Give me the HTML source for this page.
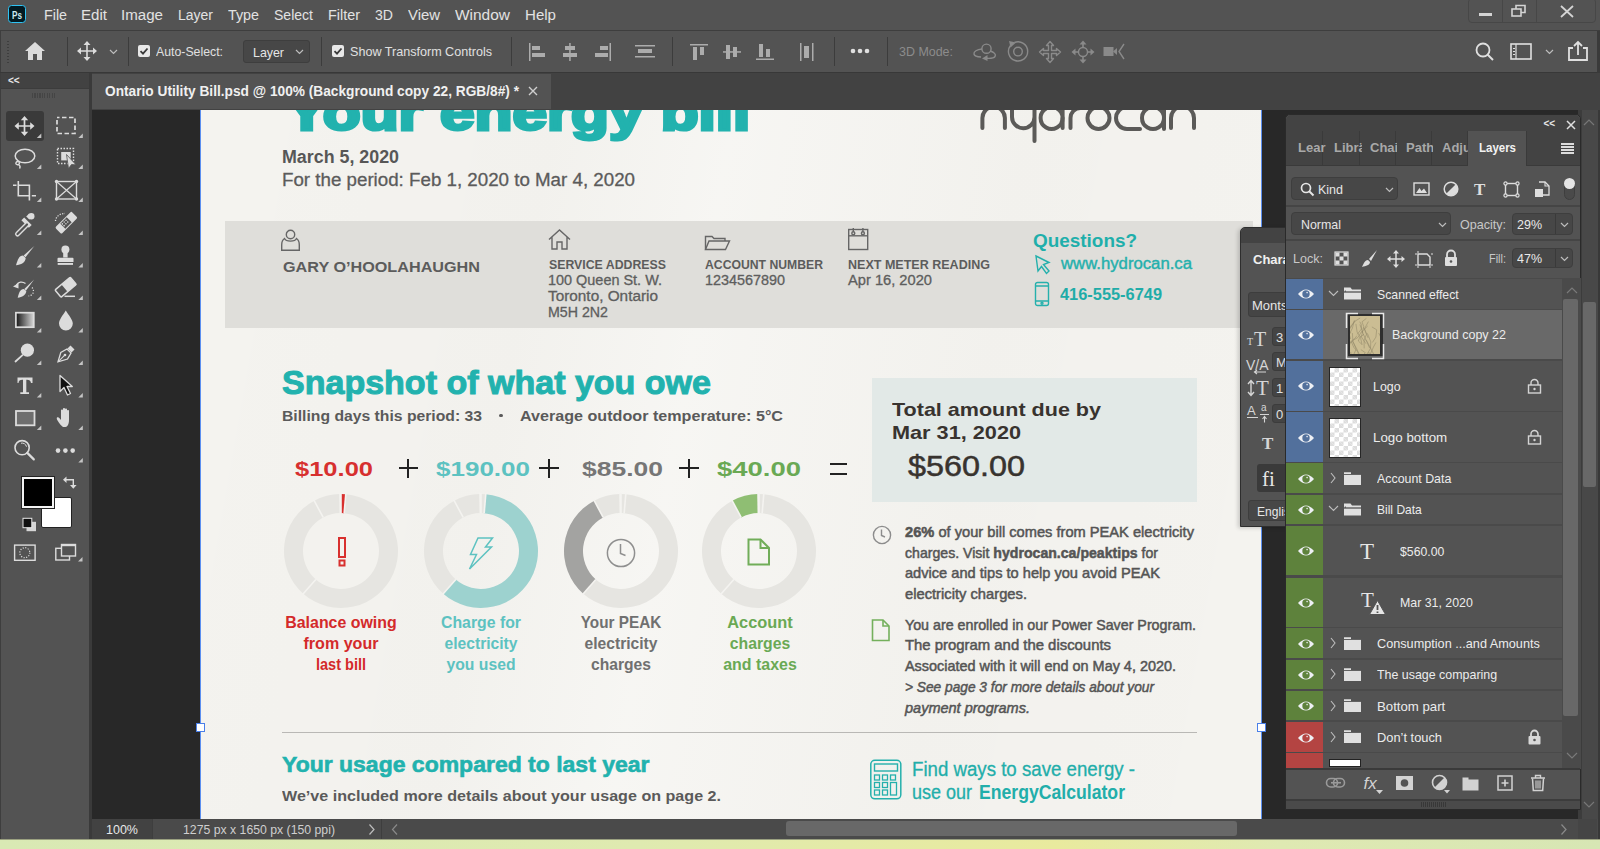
<!DOCTYPE html><html><head><meta charset="utf-8"><style>html,body{margin:0;padding:0;width:1600px;height:849px;overflow:hidden;background:#282828;}body>div,body>svg{position:absolute;box-sizing:border-box;}.t{font-family:"Liberation Sans",sans-serif;}</style></head><body>
<div style="left:0px;top:0px;width:1600px;height:30px;background:#535353;"></div>
<div style="left:0px;top:30px;width:1600px;height:1px;background:#3e3e3e;"></div>
<div style="left:8px;top:5px;width:18px;height:18px;border:1.7px solid #2fc3f4;border-radius:3.5px;background:#031a22;"></div>
<div id="t1" class="t" style="top:9.61px;font-size:10.5px;line-height:10.5px;color:#cde8f0;font-weight:700;font-family:'Liberation Sans',sans-serif;white-space:pre;left:12px;transform:scaleX(0.7786);transform-origin:0 0;">Ps</div>
<div id="t2" class="t" style="top:6.88px;font-size:15.5px;line-height:15.5px;color:#e2e2e2;font-weight:400;font-family:'Liberation Sans',sans-serif;white-space:pre;left:44px;transform:scaleX(0.9206);transform-origin:0 0;">File</div>
<div id="t3" class="t" style="top:6.88px;font-size:15.5px;line-height:15.5px;color:#e2e2e2;font-weight:400;font-family:'Liberation Sans',sans-serif;white-space:pre;left:81px;transform:scaleX(0.9731);transform-origin:0 0;">Edit</div>
<div id="t4" class="t" style="top:6.88px;font-size:15.5px;line-height:15.5px;color:#e2e2e2;font-weight:400;font-family:'Liberation Sans',sans-serif;white-space:pre;left:121px;transform:scaleX(0.9746);transform-origin:0 0;">Image</div>
<div id="t5" class="t" style="top:6.88px;font-size:15.5px;line-height:15.5px;color:#e2e2e2;font-weight:400;font-family:'Liberation Sans',sans-serif;white-space:pre;left:178px;transform:scaleX(0.9025);transform-origin:0 0;">Layer</div>
<div id="t6" class="t" style="top:6.88px;font-size:15.5px;line-height:15.5px;color:#e2e2e2;font-weight:400;font-family:'Liberation Sans',sans-serif;white-space:pre;left:228px;transform:scaleX(0.9224);transform-origin:0 0;">Type</div>
<div id="t7" class="t" style="top:6.88px;font-size:15.5px;line-height:15.5px;color:#e2e2e2;font-weight:400;font-family:'Liberation Sans',sans-serif;white-space:pre;left:274px;transform:scaleX(0.9050);transform-origin:0 0;">Select</div>
<div id="t8" class="t" style="top:6.88px;font-size:15.5px;line-height:15.5px;color:#e2e2e2;font-weight:400;font-family:'Liberation Sans',sans-serif;white-space:pre;left:328px;transform:scaleX(0.9288);transform-origin:0 0;">Filter</div>
<div id="t9" class="t" style="top:6.88px;font-size:15.5px;line-height:15.5px;color:#e2e2e2;font-weight:400;font-family:'Liberation Sans',sans-serif;white-space:pre;left:375px;transform:scaleX(0.9078);transform-origin:0 0;">3D</div>
<div id="t10" class="t" style="top:6.88px;font-size:15.5px;line-height:15.5px;color:#e2e2e2;font-weight:400;font-family:'Liberation Sans',sans-serif;white-space:pre;left:408px;transform:scaleX(0.9602);transform-origin:0 0;">View</div>
<div id="t11" class="t" style="top:6.88px;font-size:15.5px;line-height:15.5px;color:#e2e2e2;font-weight:400;font-family:'Liberation Sans',sans-serif;white-space:pre;left:455px;transform:scaleX(0.9974);transform-origin:0 0;">Window</div>
<div id="t12" class="t" style="top:6.88px;font-size:15.5px;line-height:15.5px;color:#e2e2e2;font-weight:400;font-family:'Liberation Sans',sans-serif;white-space:pre;left:525px;transform:scaleX(0.9721);transform-origin:0 0;">Help</div>
<div style="left:1468px;top:-2px;width:128px;height:25px;border:1px solid #474747;border-radius:4px;"></div>
<div style="left:1502px;top:0px;width:1px;height:23px;background:#474747;"></div>
<div style="left:1536px;top:0px;width:1px;height:23px;background:#474747;"></div>
<div style="left:1479px;top:13px;width:13px;height:3px;background:#d4d4d4;"></div>
<svg style="left:1511px;top:4px;" width="18" height="14" viewBox="0 0 18 14"><rect x="1" y="5" width="9" height="7" fill="none" stroke="#d4d4d4" stroke-width="1.6"/><path d="M5 5V1.5h9v7h-4" fill="none" stroke="#d4d4d4" stroke-width="1.6"/></svg>
<svg style="left:1560px;top:5px;" width="14" height="13" viewBox="0 0 14 13"><path d="M1 1L13 12M13 1L1 12" stroke="#d4d4d4" stroke-width="1.8"/></svg>
<div style="left:0px;top:31px;width:1600px;height:41px;background:#535353;"></div>
<div style="left:0px;top:31px;width:1px;height:41px;background:#3e3e3e;"></div>
<div style="left:0px;top:72px;width:1600px;height:1px;background:#383838;"></div>
<div style="left:7px;top:41px;width:2px;height:1px;background:#3e3e3e;"></div>
<div style="left:7px;top:44px;width:2px;height:1px;background:#3e3e3e;"></div>
<div style="left:7px;top:47px;width:2px;height:1px;background:#3e3e3e;"></div>
<div style="left:7px;top:50px;width:2px;height:1px;background:#3e3e3e;"></div>
<div style="left:7px;top:53px;width:2px;height:1px;background:#3e3e3e;"></div>
<div style="left:7px;top:56px;width:2px;height:1px;background:#3e3e3e;"></div>
<div style="left:7px;top:59px;width:2px;height:1px;background:#3e3e3e;"></div>
<div style="left:7px;top:62px;width:2px;height:1px;background:#3e3e3e;"></div>
<svg style="left:24px;top:41px;" width="22" height="20" viewBox="0 0 22 20"><path d="M11 1L21 10H18V19H13V13H9V19H4V10H1Z" fill="#dcdcdc"/></svg>
<div style="left:67px;top:37px;width:1px;height:29px;background:#3c3c3c;"></div>
<div style="left:128px;top:37px;width:1px;height:29px;background:#3c3c3c;"></div>
<div style="left:321px;top:37px;width:1px;height:29px;background:#3c3c3c;"></div>
<div style="left:511px;top:37px;width:1px;height:29px;background:#3c3c3c;"></div>
<div style="left:672px;top:37px;width:1px;height:29px;background:#3c3c3c;"></div>
<div style="left:834px;top:37px;width:1px;height:29px;background:#3c3c3c;"></div>
<div style="left:887px;top:37px;width:1px;height:29px;background:#3c3c3c;"></div>
<svg style="left:77px;top:41px;" width="20" height="20" viewBox="0 0 20 20"><path d="M10 1V19M1 10H19" stroke="#dcdcdc" stroke-width="1.6"/><path d="M10 0L6.5 4H13.5ZM10 20L6.5 16H13.5ZM0 10L4 6.5V13.5ZM20 10L16 6.5V13.5Z" fill="#dcdcdc"/></svg>
<svg style="left:109px;top:49px;" width="9" height="6" viewBox="0 0 9 6"><path d="M1 1L4.5 4.5L8 1" fill="none" stroke="#bdbdbd" stroke-width="1.2"/></svg>
<div style="left:138px;top:45px;width:12px;height:12px;background:#e8e8e8;border-radius:2px;"></div>
<svg style="left:138px;top:45px;" width="12" height="12" viewBox="0 0 12 12"><path d="M2.5 6.2L5 8.7L9.5 3.5" fill="none" stroke="#3a3a3a" stroke-width="1.8"/></svg>
<div id="t13" class="t" style="top:45.00px;font-size:13px;line-height:13px;color:#e0e0e0;font-weight:400;font-family:'Liberation Sans',sans-serif;white-space:pre;left:156px;transform:scaleX(0.9460);transform-origin:0 0;">Auto-Select:</div>
<div style="left:243px;top:40px;width:67px;height:23px;background:#474747;border:1px solid #3e3e3e;border-radius:3px;"></div>
<div id="t14" class="t" style="top:46.00px;font-size:13px;line-height:13px;color:#e6e6e6;font-weight:400;font-family:'Liberation Sans',sans-serif;white-space:pre;left:253px;transform:scaleX(0.9529);transform-origin:0 0;">Layer</div>
<svg style="left:295px;top:49px;" width="9" height="6" viewBox="0 0 9 6"><path d="M1 1L4.5 4.5L8 1" fill="none" stroke="#bdbdbd" stroke-width="1.2"/></svg>
<div style="left:332px;top:45px;width:12px;height:12px;background:#e8e8e8;border-radius:2px;"></div>
<svg style="left:332px;top:45px;" width="12" height="12" viewBox="0 0 12 12"><path d="M2.5 6.2L5 8.7L9.5 3.5" fill="none" stroke="#3a3a3a" stroke-width="1.8"/></svg>
<div id="t15" class="t" style="top:45.00px;font-size:13px;line-height:13px;color:#e0e0e0;font-weight:400;font-family:'Liberation Sans',sans-serif;white-space:pre;left:350px;transform:scaleX(0.9681);transform-origin:0 0;">Show Transform Controls</div>
<svg style="left:528px;top:43px;" width="18" height="18" viewBox="0 0 18 18"><rect x="1" y="0" width="1.5" height="18" fill="#acacac"/><rect x="4" y="3" width="8" height="4" fill="#acacac"/><rect x="4" y="10" width="13" height="4" fill="#acacac"/></svg>
<svg style="left:561px;top:43px;" width="18" height="18" viewBox="0 0 18 18"><rect x="8.2" y="0" width="1.5" height="18" fill="#acacac"/><rect x="4" y="3" width="10" height="4" fill="#acacac"/><rect x="2" y="10" width="14" height="4" fill="#acacac"/></svg>
<svg style="left:594px;top:43px;" width="18" height="18" viewBox="0 0 18 18"><rect x="15.5" y="0" width="1.5" height="18" fill="#acacac"/><rect x="6" y="3" width="8" height="4" fill="#acacac"/><rect x="1" y="10" width="13" height="4" fill="#acacac"/></svg>
<svg style="left:635px;top:45px;" width="20" height="14" viewBox="0 0 20 14"><rect x="0" y="0" width="20" height="1.5" fill="#acacac"/><rect x="3" y="4" width="14" height="4" fill="#acacac"/><rect x="0" y="11" width="20" height="1.5" fill="#acacac"/></svg>
<svg style="left:690px;top:43px;" width="18" height="18" viewBox="0 0 18 18"><rect x="0" y="1" width="18" height="1.5" fill="#acacac"/><rect x="3" y="4" width="4" height="13" fill="#acacac"/><rect x="10" y="4" width="4" height="8" fill="#acacac"/></svg>
<svg style="left:723px;top:43px;" width="18" height="18" viewBox="0 0 18 18"><rect x="0" y="8.2" width="18" height="1.5" fill="#acacac"/><rect x="3" y="2" width="4" height="14" fill="#acacac"/><rect x="10" y="4" width="4" height="10" fill="#acacac"/></svg>
<svg style="left:756px;top:43px;" width="18" height="18" viewBox="0 0 18 18"><rect x="0" y="15.5" width="18" height="1.5" fill="#acacac"/><rect x="3" y="1" width="4" height="13" fill="#acacac"/><rect x="10" y="6" width="4" height="8" fill="#acacac"/></svg>
<svg style="left:799px;top:43px;" width="16" height="18" viewBox="0 0 16 18"><rect x="1" y="0" width="1.5" height="18" fill="#acacac"/><rect x="5" y="3" width="5" height="12" fill="#acacac"/><rect x="13" y="0" width="1.5" height="18" fill="#acacac"/></svg>
<svg style="left:850px;top:48px;" width="20" height="6" viewBox="0 0 20 6"><circle cx="3" cy="3" r="2.3" fill="#e0e0e0"/><circle cx="10" cy="3" r="2.3" fill="#e0e0e0"/><circle cx="17" cy="3" r="2.3" fill="#e0e0e0"/></svg>
<div id="t16" class="t" style="top:45.00px;font-size:13px;line-height:13px;color:#8c8c8c;font-weight:400;font-family:'Liberation Sans',sans-serif;white-space:pre;left:899px;transform:scaleX(0.9579);transform-origin:0 0;">3D Mode:</div>
<svg style="left:970px;top:38px;" width="32" height="28" viewBox="0 0 32 28"><circle cx="16.5" cy="10.7" r="4.6" fill="none" stroke="#8a8a8a" stroke-width="1.4"/><path d="M12 11C7 11.5 3.5 13.5 4 16C4.5 18.5 8 18.8 11 19" fill="none" stroke="#8a8a8a" stroke-width="1.4"/><path d="M20 13C24 14 26.5 16.5 25 18.5C24 20 21 20.5 17 20.3" fill="none" stroke="#8a8a8a" stroke-width="1.4"/><path d="M17.5 17L12 20.5L17.5 23Z" fill="#8a8a8a"/></svg>
<svg style="left:1005px;top:38px;" width="26" height="28" viewBox="0 0 26 28"><path d="M9.5 4.5A9.6 9.6 0 1 1 5.5 7.5" fill="none" stroke="#8a8a8a" stroke-width="1.4"/><circle cx="13" cy="13.6" r="4.3" fill="none" stroke="#8a8a8a" stroke-width="1.4"/><path d="M4 3L11 4.5L5.5 9.5Z" fill="#8a8a8a"/></svg>
<svg style="left:1038px;top:40px;" width="24" height="24" viewBox="0 0 24 24"><path d="M12 1.5L15.5 5.5H13.5V10.5H18.5V8.5L22.5 12L18.5 15.5V13.5H13.5V18.5H15.5L12 22.5L8.5 18.5H10.5V13.5H5.5V15.5L1.5 12L5.5 8.5V10.5H10.5V5.5H8.5Z" fill="none" stroke="#8a8a8a" stroke-width="1.4" stroke-linejoin="round"/></svg>
<svg style="left:1070px;top:39px;" width="26" height="26" viewBox="0 0 26 26"><circle cx="13" cy="13" r="4.5" fill="none" stroke="#8a8a8a" stroke-width="1.4"/><path d="M13 1.5L9.5 5.5H16.5ZM13 24.5L9.5 20.5H16.5ZM1.5 13L5.5 9.5V16.5ZM24.5 13L20.5 9.5V16.5Z" fill="#8a8a8a"/><path d="M13 5V8.5M13 17.5V21M5 13H8.5M17.5 13H21" stroke="#8a8a8a" stroke-width="1.6"/></svg>
<svg style="left:1102px;top:42px;" width="24" height="20" viewBox="0 0 24 20"><rect x="1.5" y="5" width="10" height="9" fill="#8a8a8a"/><path d="M11 9.5L15 6V13Z" fill="#8a8a8a"/><path d="M22 2L17 9.5L22 17" fill="none" stroke="#8a8a8a" stroke-width="1.4"/></svg>
<svg style="left:1475px;top:42px;" width="20" height="20" viewBox="0 0 20 20"><circle cx="8" cy="8" r="6.5" fill="none" stroke="#e0e0e0" stroke-width="1.8"/><path d="M12.5 12.5L18 18" stroke="#e0e0e0" stroke-width="2"/></svg>
<svg style="left:1510px;top:43px;" width="22" height="18" viewBox="0 0 22 18"><rect x="1" y="1" width="20" height="15" fill="none" stroke="#e0e0e0" stroke-width="1.6"/><path d="M6 1V16" stroke="#e0e0e0" stroke-width="1.2"/><rect x="3" y="5" width="2" height="1" fill="#e0e0e0"/><rect x="3" y="8" width="2" height="1" fill="#e0e0e0"/><rect x="3" y="11" width="2" height="1" fill="#e0e0e0"/></svg>
<svg style="left:1545px;top:49px;" width="9" height="6" viewBox="0 0 9 6"><path d="M1 1L4.5 4.5L8 1" fill="none" stroke="#bdbdbd" stroke-width="1.2"/></svg>
<svg style="left:1567px;top:40px;" width="22" height="22" viewBox="0 0 22 22"><path d="M6 8H2V20H20V8H16" fill="none" stroke="#e0e0e0" stroke-width="1.8"/><path d="M11 15V2M7 6L11 2L15 6" fill="none" stroke="#e0e0e0" stroke-width="1.8"/></svg>
<div style="left:1597px;top:31px;width:3px;height:42px;background:#3a3a3a;"></div>
<div style="left:0px;top:73px;width:1600px;height:37px;background:#424242;"></div>
<div style="left:92px;top:74px;width:459px;height:35px;background:#535353;"></div>
<div id="t17" class="t" style="top:84.15px;font-size:14px;line-height:14px;color:#f0f0f0;font-weight:700;font-family:'Liberation Sans',sans-serif;white-space:pre;left:105px;transform:scaleX(0.9790);transform-origin:0 0;">Ontario Utility Bill.psd @ 100% (Background copy 22, RGB/8#) *</div>
<svg style="left:528px;top:86px;" width="10" height="10" viewBox="0 0 10 10"><path d="M1 1L9 9M9 1L1 9" stroke="#cfcfcf" stroke-width="1.4"/></svg>
<div style="left:0px;top:73px;width:89px;height:766px;background:#535353;"></div>
<div style="left:0px;top:73px;width:89px;height:15px;background:#424242;"></div>
<div style="left:0px;top:87.5px;width:89px;height:1px;background:#3c3c3c;"></div>
<div style="left:0px;top:73px;width:1.3px;height:766px;background:#3e3e3e;"></div>
<div style="left:89px;top:73px;width:3px;height:766px;background:#3a3a3a;"></div>
<div id="t18" class="t" style="top:75.53px;font-size:10px;line-height:10px;color:#e8e8e8;font-weight:700;font-family:'Liberation Sans',sans-serif;white-space:pre;left:8px;">&lt;&lt;</div>
<div style="left:32.0px;top:92.5px;width:1.2px;height:5px;background:#454545;"></div>
<div style="left:34.45px;top:92.5px;width:1.2px;height:5px;background:#454545;"></div>
<div style="left:36.9px;top:92.5px;width:1.2px;height:5px;background:#454545;"></div>
<div style="left:39.35px;top:92.5px;width:1.2px;height:5px;background:#454545;"></div>
<div style="left:41.8px;top:92.5px;width:1.2px;height:5px;background:#454545;"></div>
<div style="left:44.25px;top:92.5px;width:1.2px;height:5px;background:#454545;"></div>
<div style="left:46.7px;top:92.5px;width:1.2px;height:5px;background:#454545;"></div>
<div style="left:49.150000000000006px;top:92.5px;width:1.2px;height:5px;background:#454545;"></div>
<div style="left:51.6px;top:92.5px;width:1.2px;height:5px;background:#454545;"></div>
<div style="left:54.05px;top:92.5px;width:1.2px;height:5px;background:#454545;"></div>
<div style="left:92px;top:110px;width:1508px;height:709px;background:#282828;"></div>
<div style="left:92px;top:819px;width:1508px;height:20px;background:#4a4a4a;"></div>
<div style="left:92px;top:819px;width:60px;height:20px;background:#424242;"></div>
<div style="left:152px;top:819px;width:1px;height:20px;background:#3e3e3e;"></div>
<div style="left:381px;top:819px;width:1px;height:20px;background:#3e3e3e;"></div>
<div id="t19" class="t" style="top:823.00px;font-size:13px;line-height:13px;color:#e8e8e8;font-weight:400;font-family:'Liberation Sans',sans-serif;white-space:pre;left:106px;transform:scaleX(0.9624);transform-origin:0 0;">100%</div>
<div id="t20" class="t" style="top:823.00px;font-size:13px;line-height:13px;color:#cfcfcf;font-weight:400;font-family:'Liberation Sans',sans-serif;white-space:pre;left:183px;transform:scaleX(0.9431);transform-origin:0 0;">1275 px x 1650 px (150 ppi)</div>
<svg style="left:368px;top:823px;" width="8" height="13" viewBox="0 0 8 13"><path d="M1.5 1.5L6 6.5L1.5 11.5" fill="none" stroke="#bdbdbd" stroke-width="1.2"/></svg>
<svg style="left:391px;top:823px;" width="8" height="13" viewBox="0 0 8 13"><path d="M6 1.5L1.5 6.5L6 11.5" fill="none" stroke="#8a8a8a" stroke-width="1.2"/></svg>
<div style="left:786px;top:821px;width:451px;height:15px;background:#686868;border-radius:3px;"></div>
<svg style="left:1560px;top:823px;" width="8" height="13" viewBox="0 0 8 13"><path d="M1.5 1.5L6 6.5L1.5 11.5" fill="none" stroke="#8a8a8a" stroke-width="1.2"/></svg>
<div style="left:1578px;top:819px;width:19px;height:20px;background:#454545;"></div>
<div style="left:0px;top:839px;width:1600px;height:10px;background:linear-gradient(90deg,#d9e9b4 0%,#dfeab0 40%,#e9ea9e 66%,#dfe9b2 80%,#d7e6b4 100%);"></div>
<div style="left:0px;top:839px;width:1600px;height:1px;background:#9aa080;"></div>
<div style="left:6px;top:111px;width:38px;height:30px;background:#3a3a3a;border-radius:3px;"></div>
<svg style="left:0px;top:0px;" width="89" height="570" viewBox="0 0 89 570"><path d="M41.3 133.5V138H36.8Z" fill="#c4c4c4"/><path d="M82.8 133.5V138H78.3Z" fill="#c4c4c4"/><path d="M41.3 164.5V169H36.8Z" fill="#c4c4c4"/><path d="M82.8 164.5V169H78.3Z" fill="#c4c4c4"/><path d="M41.3 197.5V202H36.8Z" fill="#c4c4c4"/><path d="M82.8 197.5V202H78.3Z" fill="#c4c4c4"/><path d="M41.3 230.5V235H36.8Z" fill="#c4c4c4"/><path d="M82.8 230.5V235H78.3Z" fill="#c4c4c4"/><path d="M41.3 263.0V267.5H36.8Z" fill="#c4c4c4"/><path d="M82.8 263.0V267.5H78.3Z" fill="#c4c4c4"/><path d="M41.3 295.5V300H36.8Z" fill="#c4c4c4"/><path d="M82.8 295.5V300H78.3Z" fill="#c4c4c4"/><path d="M41.3 328.0V332.5H36.8Z" fill="#c4c4c4"/><path d="M82.8 328.0V332.5H78.3Z" fill="#c4c4c4"/><path d="M41.3 360.5V365H36.8Z" fill="#c4c4c4"/><path d="M82.8 360.5V365H78.3Z" fill="#c4c4c4"/><path d="M41.3 393.0V397.5H36.8Z" fill="#c4c4c4"/><path d="M82.8 393.0V397.5H78.3Z" fill="#c4c4c4"/><path d="M41.3 425.5V430H36.8Z" fill="#c4c4c4"/><path d="M82.8 425.5V430H78.3Z" fill="#c4c4c4"/><path d="M82.8 458.0V462.5H78.3Z" fill="#c4c4c4"/><path d="M82.5 557V561.5H78Z" fill="#c4c4c4"/><path d="M24.5 118V134M16.5 126H32.5" stroke="#dcdcdc" stroke-width="1.7"/><path d="M24.5 116L20.8 120.3H28.2ZM24.5 136L20.8 131.7H28.2ZM14.5 126L18.8 122.3V129.7ZM34.5 126L30.2 122.3V129.7Z" fill="#dcdcdc"/><rect x="57" y="117.5" width="18" height="16" fill="none" stroke="#dcdcdc" stroke-width="1.7" stroke-dasharray="4.5 2.5" stroke-dashoffset="2"/><ellipse cx="25" cy="156" rx="9.8" ry="6.8" fill="none" stroke="#dcdcdc" stroke-width="1.5"/><path d="M18 161.5c-2.5 0-3 3 -0.5 3.2c2.5 0.2 2.5 -2.5 0.5 -3.5M18.5 164.5c1.5 1 2 2.5 1 4" fill="none" stroke="#dcdcdc" stroke-width="1.4"/><rect x="57.5" y="148.5" width="16" height="15" fill="none" stroke="#dcdcdc" stroke-width="1.4" stroke-dasharray="1.5 1.5"/><rect x="61.2" y="152" width="9.5" height="8.4" fill="#dcdcdc"/><path d="M66.5 154.5L76 164.8L71.5 164.5L68.5 168.6Z" fill="#dcdcdc" stroke="#535353" stroke-width="0.8"/><path d="M13 185.2H16.5M18.3 181V195.8H29.4M18.3 185.2H29.4V200.4M31.8 195.8H36" fill="none" stroke="#dcdcdc" stroke-width="1.6"/><rect x="56.5" y="181.5" width="20" height="17.5" fill="none" stroke="#dcdcdc" stroke-width="1.4"/><path d="M56.5 181.5L76.5 199M76.5 181.5L56.5 199" stroke="#dcdcdc" stroke-width="1.2"/><circle cx="56.5" cy="181.5" r="1.7" fill="#dcdcdc"/><circle cx="56.5" cy="199" r="1.7" fill="#dcdcdc"/><circle cx="76.5" cy="181.5" r="1.7" fill="#dcdcdc"/><circle cx="76.5" cy="199" r="1.7" fill="#dcdcdc"/><circle cx="31.3" cy="216.3" r="3.2" fill="#dcdcdc"/><path d="M22.8 218.8L30.3 226.3" stroke="#dcdcdc" stroke-width="4"/><path d="M27 224.5L17.5 234" stroke="#dcdcdc" stroke-width="5" stroke-linecap="round"/><path d="M27 224.5L17.5 234" stroke="#535353" stroke-width="2.2" stroke-linecap="round"/><path d="M27.8 218L30.5 215.3" stroke="#dcdcdc" stroke-width="4.5"/><g transform="rotate(-45 66 223)"><rect x="55" y="218.5" width="23" height="9" rx="1.5" fill="#dcdcdc"/><rect x="61.5" y="219.5" width="9" height="7" fill="#535353"/><circle cx="62.8" cy="221.0" r="0.75" fill="#dcdcdc"/><circle cx="62.8" cy="223.5" r="0.75" fill="#dcdcdc"/><circle cx="65.39999999999999" cy="221.0" r="0.75" fill="#dcdcdc"/><circle cx="65.39999999999999" cy="223.5" r="0.75" fill="#dcdcdc"/><circle cx="68.0" cy="221.0" r="0.75" fill="#dcdcdc"/><circle cx="68.0" cy="223.5" r="0.75" fill="#dcdcdc"/></g><path d="M55.5 221a9 8 0 0 1 9.5-7.5" fill="none" stroke="#dcdcdc" stroke-width="1.3" stroke-dasharray="1.2 1.4"/><path d="M34.3 246L25.5 257.3L23.6 255.6Z" fill="#dcdcdc"/><path d="M23 255.5C19 255.8 18 259 16 265.3C21 264.8 25.5 262.5 25.7 258Z" fill="#dcdcdc"/><circle cx="65.4" cy="249.5" r="4" fill="#dcdcdc"/><rect x="63.2" y="252" width="4.4" height="5.5" fill="#dcdcdc"/><path d="M58.5 257.7H72.5a1 1 0 0 1 1 1V262H57.5V258.7a1 1 0 0 1 1-1Z" fill="#dcdcdc"/><rect x="57.7" y="263" width="15.3" height="1.9" fill="#dcdcdc"/><path d="M34.2 279.5L26 290.5L24.3 289Z" fill="#dcdcdc"/><path d="M23.8 289C20 289.3 19 292.3 17.7 297.8C22 297.3 26 295 26.3 291Z" fill="#dcdcdc"/><path d="M25.5 283.5C22 281 18.5 282 16.5 285" fill="none" stroke="#dcdcdc" stroke-width="1.4"/><path d="M13 286.5L18.5 283V288.5Z" fill="#dcdcdc"/><path d="M32 287.5a5 5 0 0 1-3.5 8.5" fill="none" stroke="#dcdcdc" stroke-width="1.2" stroke-dasharray="1.2 1.5"/><g transform="rotate(-40 65.5 287)"><rect x="55.5" y="282.5" width="20" height="9.5" rx="1" fill="none" stroke="#dcdcdc" stroke-width="1.5"/><rect x="64" y="282.5" width="11.5" height="9.5" fill="#dcdcdc"/></g><path d="M64.5 296.3H75" stroke="#dcdcdc" stroke-width="1.5"/><defs><linearGradient id="grd" x1="0" x2="1" y1="0" y2="0"><stop offset="0" stop-color="#151515"/><stop offset="1" stop-color="#d8d8d8"/></linearGradient></defs><rect x="15.9" y="312.7" width="17.9" height="14.5" fill="url(#grd)" stroke="#dcdcdc" stroke-width="1.7"/><path d="M65.8 310.6C63 315 59 320 59 323.5A6.9 6.9 0 0 0 72.8 323.5C72.8 320 68.5 315 65.8 310.6Z" fill="#dcdcdc"/><circle cx="27.4" cy="350.2" r="6.6" fill="#dcdcdc"/><path d="M22.5 355.2L15.5 361.5" stroke="#dcdcdc" stroke-width="1.8" stroke-linecap="round"/><path d="M70.5 345.5L74.5 349.5L71.5 352.5L67.5 348.5Z" fill="#dcdcdc"/><path d="M67 349L71 353L67.5 359L58 361.8L60.8 352.5Z" fill="none" stroke="#dcdcdc" stroke-width="1.3"/><path d="M58.5 361.3L64.5 355.3" stroke="#dcdcdc" stroke-width="1.1"/><circle cx="65" cy="355" r="1.3" fill="#dcdcdc"/><path d="M17.5 377.5H32.5V383H31C30.5 380.5 29.5 379.8 27 379.8H26.3V392.3H29V394H20.3V392.3H23V379.8H22.3C19.8 379.8 18.8 380.5 18.5 383H17.5Z" fill="#dcdcdc"/><path d="M60 375.4V391.5L64 387.5L67.5 395L70.5 393.5L67 386.5H72.3Z" fill="#111" stroke="#dcdcdc" stroke-width="1.3" stroke-linejoin="round"/><rect x="16" y="411" width="18.5" height="14.3" fill="#6e6e6e" stroke="#dcdcdc" stroke-width="1.8"/><path d="M63 427C60 424.5 57 420 56.8 418.7C56.5 417.3 58.2 416.8 59.3 418L61 420V410.5C61 409.3 63 409.3 63 410.5V416.5V409C63 407.8 65 407.8 65 409V416.5V409.5C65 408.3 67 408.3 67 409.5V417V411C67 409.8 69 409.8 69 411V420C69 424 67.5 427 65.5 427Z" fill="#dcdcdc"/><circle cx="22.1" cy="447.7" r="7.1" fill="none" stroke="#dcdcdc" stroke-width="1.6"/><path d="M27.3 452.9L33.8 459.4" stroke="#dcdcdc" stroke-width="2.2" stroke-linecap="round"/><path d="M21 443.2a4.5 4.5 0 0 1 5.5 3.5" fill="none" stroke="#dcdcdc" stroke-width="1"/><circle cx="58" cy="450.6" r="2.3" fill="#dcdcdc"/><circle cx="65.4" cy="450.6" r="2.3" fill="#dcdcdc"/><circle cx="72.7" cy="450.6" r="2.3" fill="#dcdcdc"/><path d="M66 479.8H73.3V485.5" fill="none" stroke="#dcdcdc" stroke-width="1.4"/><path d="M63 479.8L66.5 476.5V483ZM73.3 488.8L70 485H76.6Z" fill="#dcdcdc"/><rect x="26.5" y="521.8" width="9.5" height="9.4" fill="#d6d6d6"/><rect x="23" y="518.3" width="8.8" height="9.4" fill="#111" stroke="#e6e6e6" stroke-width="1"/><rect x="14.6" y="545.1" width="20.5" height="15.2" fill="none" stroke="#dcdcdc" stroke-width="1.4"/><circle cx="24.8" cy="552.7" r="5" fill="none" stroke="#dcdcdc" stroke-width="1.2" stroke-dasharray="1.1 1.5"/><rect x="55.8" y="548.3" width="13.7" height="11.7" fill="#535353" stroke="#dcdcdc" stroke-width="1.4"/><rect x="61.5" y="544.5" width="14" height="11.5" fill="#535353" stroke="#dcdcdc" stroke-width="1.4"/><rect x="61.5" y="544" width="14" height="2.2" fill="#dcdcdc"/></svg>
<div style="left:40.6px;top:496.5px;width:31.5px;height:31.8px;background:#fff;border:1px solid #222;border-radius:2px;"></div>
<div style="left:22.4px;top:476.5px;width:31.2px;height:31.2px;background:#000;border:2px solid #f4f4f4;box-shadow:0 0 0 1px #222;"></div>
<div style="left:200px;top:110px;width:1062px;height:709px;background:#f4f3ef;"></div>
<div style="left:200px;top:110px;width:1062px;height:709px;background:linear-gradient(100deg,rgba(0,0,0,0) 0%,rgba(0,0,0,0.008) 30%,rgba(255,255,255,0.25) 45%,rgba(0,0,0,0.006) 70%,rgba(0,0,0,0) 100%);"></div>
<div style="left:200px;top:110px;width:1px;height:709px;background:#5b8ff0;"></div>
<div style="left:1261px;top:110px;width:1px;height:709px;background:#5b8ff0;"></div>
<div style="left:196px;top:723px;width:9px;height:9px;background:#fff;border:1px solid #4a7fe8;"></div>
<div style="left:1257px;top:723px;width:9px;height:9px;background:#fff;border:1px solid #4a7fe8;"></div>
<div style="left:200px;top:110px;width:700px;height:40px;overflow:hidden;"><div style="position:absolute;left:85.6px;top:-22.3px;font-family:'Liberation Sans',sans-serif;font-weight:700;font-size:50px;line-height:50px;color:#22b2ae;-webkit-text-stroke:3.2px #22b2ae;white-space:pre;transform:scaleX(1.241);transform-origin:0 0;" id="title">Your energy bill</div></div>
<svg style="left:970px;top:100px;clip-path:inset(10px 0 0 0);" width="240" height="50" viewBox="0 0 240 50"><path d="M12.4 28V18a11 11 0 0 1 22.5 0V28" fill="none" stroke="#5b5a58" stroke-width="4" stroke-linecap="round"/><path d="M42 5V17a11 11 0 0 0 22.5 0V5M64.5 17V41" fill="none" stroke="#5b5a58" stroke-width="4" stroke-linecap="round"/><path d="M92.6 5V18a11 11 0 1 1 0-0.1" fill="none" stroke="#5b5a58" stroke-width="4" stroke-linecap="round"/><path d="M92.6 18V28" fill="none" stroke="#5b5a58" stroke-width="4" stroke-linecap="round"/><path d="M100.5 28V18a10 10 0 0 1 10-10" fill="none" stroke="#5b5a58" stroke-width="4" stroke-linecap="round"/><circle cx="128.5" cy="18" r="11" fill="none" stroke="#5b5a58" stroke-width="4" stroke-linecap="round"/><path d="M170 29H157a11 11 0 0 1 0-22" fill="none" stroke="#5b5a58" stroke-width="4" stroke-linecap="round"/><path d="M194 5V18a11 11 0 1 1 0-0.1M194 18V29" fill="none" stroke="#5b5a58" stroke-width="4" stroke-linecap="round"/><path d="M201 28V18a11.5 11.5 0 0 1 23 0V28" fill="none" stroke="#5b5a58" stroke-width="4" stroke-linecap="round"/></svg>
<div id="t21" class="t" style="top:148.26px;font-size:18px;line-height:18px;color:#575757;font-weight:700;font-family:'Liberation Sans',sans-serif;white-space:pre;left:282px;transform:scaleX(0.9909);transform-origin:0 0;">March 5, 2020</div>
<div id="t22" class="t" style="top:170.76px;font-size:18px;line-height:18px;color:#5b5b5b;font-weight:400;font-family:'Liberation Sans',sans-serif;white-space:pre;left:282px;transform:scaleX(1.0406);transform-origin:0 0;-webkit-text-stroke:0.3px #5b5b5b;">For the period: Feb 1, 2020 to Mar 4, 2020</div>
<div style="left:225px;top:221px;width:1028px;height:107px;background:#dfdeda;"></div>
<svg style="left:280px;top:228px;" width="22" height="24" viewBox="0 0 22 24"><circle cx="10.5" cy="6.5" r="4.2" fill="none" stroke="#666" stroke-width="1.4"/><path d="M4.5 10.5C2 12 1.7 14 1.7 17V22.3H19.3V17C19.3 14 19 12 16.5 10.5C15 14 6 14 4.5 10.5Z" fill="none" stroke="#666" stroke-width="1.4"/></svg>
<div id="t23" class="t" style="top:258.80px;font-size:15px;line-height:15px;color:#5c5c5c;font-weight:700;font-family:'Liberation Sans',sans-serif;white-space:pre;left:283px;transform:scaleX(1.0794);transform-origin:0 0;">GARY O’HOOLAHAUGHN</div>
<svg style="left:547px;top:228px;" width="25" height="24" viewBox="0 0 25 24"><path d="M2 11.5L12.5 2L23 11.5M5 9V21H10V14H15V21H20V9" fill="none" stroke="#666" stroke-width="1.4"/></svg>
<div id="t24" class="t" style="top:258.92px;font-size:12.5px;line-height:12.5px;color:#5c5c5c;font-weight:700;font-family:'Liberation Sans',sans-serif;white-space:pre;left:549px;transform:scaleX(0.9850);transform-origin:0 0;">SERVICE ADDRESS</div>
<div id="t25" class="t" style="top:273.15px;font-size:14px;line-height:14px;color:#5e5e5e;font-weight:400;font-family:'Liberation Sans',sans-serif;white-space:pre;left:547.5px;transform:scaleX(1.0315);transform-origin:0 0;-webkit-text-stroke:0.3px #5e5e5e;">100 Queen St. W.</div>
<div id="t26" class="t" style="top:289.15px;font-size:14px;line-height:14px;color:#5e5e5e;font-weight:400;font-family:'Liberation Sans',sans-serif;white-space:pre;left:547.5px;transform:scaleX(1.0957);transform-origin:0 0;-webkit-text-stroke:0.3px #5e5e5e;">Toronto, Ontario</div>
<div id="t27" class="t" style="top:305.15px;font-size:14px;line-height:14px;color:#5e5e5e;font-weight:400;font-family:'Liberation Sans',sans-serif;white-space:pre;left:547.5px;transform:scaleX(1.0145);transform-origin:0 0;-webkit-text-stroke:0.3px #5e5e5e;">M5H 2N2</div>
<svg style="left:704px;top:234px;" width="27" height="18" viewBox="0 0 27 18"><path d="M1.5 15.5V2.5H8L10 4.5H21V7" fill="none" stroke="#666" stroke-width="1.4"/><path d="M1.5 15.5L5 7H25.5L21.5 15.5Z" fill="none" stroke="#666" stroke-width="1.4"/></svg>
<div id="t28" class="t" style="top:258.92px;font-size:12.5px;line-height:12.5px;color:#5c5c5c;font-weight:700;font-family:'Liberation Sans',sans-serif;white-space:pre;left:705px;transform:scaleX(0.9766);transform-origin:0 0;">ACCOUNT NUMBER</div>
<div id="t29" class="t" style="top:273.15px;font-size:14px;line-height:14px;color:#5e5e5e;font-weight:400;font-family:'Liberation Sans',sans-serif;white-space:pre;left:705px;transform:scaleX(1.0273);transform-origin:0 0;-webkit-text-stroke:0.3px #5e5e5e;">1234567890</div>
<svg style="left:847px;top:227px;" width="23" height="25" viewBox="0 0 23 25"><rect x="1.7" y="2.5" width="19" height="20" fill="none" stroke="#666" stroke-width="1.4"/><path d="M1.7 8.8H20.7" fill="none" stroke="#666" stroke-width="1.4"/><circle cx="6.3" cy="6.2" r="1.5" fill="none" stroke="#666" stroke-width="1.4"/><circle cx="15.9" cy="6.2" r="1.5" fill="none" stroke="#666" stroke-width="1.4"/><path d="M6.3 1V4.7M15.9 1V4.7" fill="none" stroke="#666" stroke-width="1.4"/></svg>
<div id="t30" class="t" style="top:258.92px;font-size:12.5px;line-height:12.5px;color:#5c5c5c;font-weight:700;font-family:'Liberation Sans',sans-serif;white-space:pre;left:848px;transform:scaleX(1.0022);transform-origin:0 0;">NEXT METER READING</div>
<div id="t31" class="t" style="top:273.15px;font-size:14px;line-height:14px;color:#5e5e5e;font-weight:400;font-family:'Liberation Sans',sans-serif;white-space:pre;left:848px;transform:scaleX(1.0477);transform-origin:0 0;-webkit-text-stroke:0.3px #5e5e5e;">Apr 16, 2020</div>
<div id="t32" class="t" style="top:232.26px;font-size:18px;line-height:18px;color:#1fafab;font-weight:700;font-family:'Liberation Sans',sans-serif;white-space:pre;left:1032.5px;transform:scaleX(1.0503);transform-origin:0 0;">Questions?</div>
<svg style="left:1034px;top:254px;" width="18" height="23" viewBox="0 0 18 23"><path d="M2 2L15 8.5L9.5 10.5L15 17L12.5 19.5L7.5 12.5L4 17Z" fill="none" stroke="#25b0ac" stroke-width="1.4"/></svg>
<div id="t33" class="t" style="top:256.46px;font-size:16px;line-height:16px;color:#25b0ac;font-weight:400;font-family:'Liberation Sans',sans-serif;white-space:pre;left:1060.5px;transform:scaleX(1.0447);transform-origin:0 0;-webkit-text-stroke:0.4px #25b0ac;">www.hydrocan.ca</div>
<svg style="left:1034px;top:281px;" width="17" height="27" viewBox="0 0 17 27"><rect x="1.5" y="1.5" width="13" height="23" rx="2" fill="none" stroke="#25b0ac" stroke-width="1.4"/><path d="M1.5 20H14.5M1.5 5H14.5" fill="none" stroke="#25b0ac" stroke-width="1.4"/><circle cx="8" cy="22.3" r="1" fill="none" stroke="#25b0ac" stroke-width="1.4"/></svg>
<div id="t34" class="t" style="top:287.46px;font-size:16px;line-height:16px;color:#1faca8;font-weight:700;font-family:'Liberation Sans',sans-serif;white-space:pre;left:1060px;transform:scaleX(1.0237);transform-origin:0 0;">416-555-6749</div>
<div id="t35" class="t" style="top:366.14px;font-size:33.5px;line-height:33.5px;color:#22b2ae;font-weight:700;font-family:'Liberation Sans',sans-serif;white-space:pre;left:282px;transform:scaleX(1.0154);transform-origin:0 0;-webkit-text-stroke:1px #22b2ae;">Snapshot of what you owe</div>
<div id="t36" class="t" style="top:409.23px;font-size:14.5px;line-height:14.5px;color:#5a5a5a;font-weight:700;font-family:'Liberation Sans',sans-serif;white-space:pre;left:282px;transform:scaleX(1.0839);transform-origin:0 0;">Billing days this period: 33</div>
<div style="left:499px;top:413.5px;width:3.5px;height:3.5px;background:#5a5a5a;border-radius:50%;"></div>
<div id="t37" class="t" style="top:409.23px;font-size:14.5px;line-height:14.5px;color:#5a5a5a;font-weight:700;font-family:'Liberation Sans',sans-serif;white-space:pre;left:520px;transform:scaleX(1.1120);transform-origin:0 0;">Average outdoor temperature: 5°C</div>
<div id="t38" class="t" style="top:458.57px;font-size:20px;line-height:20px;color:#d7302f;font-weight:700;font-family:'Liberation Sans',sans-serif;white-space:pre;left:295px;transform:scaleX(1.2751);transform-origin:0 0;">$10.00</div>
<div id="t39" class="t" style="top:458.57px;font-size:20px;line-height:20px;color:#5dc2c1;font-weight:700;font-family:'Liberation Sans',sans-serif;white-space:pre;left:435.5px;transform:scaleX(1.3002);transform-origin:0 0;">$190.00</div>
<div id="t40" class="t" style="top:458.57px;font-size:20px;line-height:20px;color:#767676;font-weight:700;font-family:'Liberation Sans',sans-serif;white-space:pre;left:581.5px;transform:scaleX(1.3241);transform-origin:0 0;">$85.00</div>
<div id="t41" class="t" style="top:458.57px;font-size:20px;line-height:20px;color:#6aa954;font-weight:700;font-family:'Liberation Sans',sans-serif;white-space:pre;left:717px;transform:scaleX(1.3732);transform-origin:0 0;">$40.00</div>
<div style="left:398.5px;top:466.8px;width:19.5px;height:2px;background:#222;"></div>
<div style="left:407.3px;top:458.5px;width:2px;height:19px;background:#222;"></div>
<div style="left:539px;top:466.8px;width:19.5px;height:2px;background:#222;"></div>
<div style="left:547.8px;top:458.5px;width:2px;height:19px;background:#222;"></div>
<div style="left:679px;top:466.8px;width:19.5px;height:2px;background:#222;"></div>
<div style="left:687.8px;top:458.5px;width:2px;height:19px;background:#222;"></div>
<div style="left:830px;top:463px;width:17px;height:2px;background:#222;"></div>
<div style="left:830px;top:473px;width:17px;height:2px;background:#222;"></div>
<svg style="left:281px;top:490.79999999999995px;" width="120" height="120" viewBox="0 0 120 120"><path d="M60.00 3.00A57 57 0 0 1 64.77 3.20L63.18 22.13A38 38 0 0 0 60.00 22.00Z" fill="#d8302e"/><path d="M64.77 3.20A57 57 0 1 1 22.23 102.69L34.82 88.46A38 38 0 1 0 63.18 22.13Z" fill="#e6e5e1"/><path d="M22.23 102.69A57 57 0 0 1 33.24 9.67L42.16 26.45A38 38 0 0 0 34.82 88.46Z" fill="#e6e5e1"/><path d="M33.24 9.67A57 57 0 0 1 59.01 3.01L59.34 22.01A38 38 0 0 0 42.16 26.45Z" fill="#e6e5e1"/><path d="M60.00 22.00L60.00 2.00" stroke="#f4f3f0" stroke-width="1.6"/><path d="M63.18 22.13L64.85 2.20" stroke="#f4f3f0" stroke-width="1.6"/><path d="M34.82 88.46L21.57 103.44" stroke="#f4f3f0" stroke-width="1.6"/><path d="M42.16 26.45L32.77 8.79" stroke="#f4f3f0" stroke-width="1.6"/><path d="M59.34 22.01L58.99 2.01" stroke="#f4f3f0" stroke-width="1.6"/></svg>
<svg style="left:421px;top:490.79999999999995px;" width="120" height="120" viewBox="0 0 120 120"><path d="M60.00 3.00A57 57 0 0 1 64.77 3.20L63.18 22.13A38 38 0 0 0 60.00 22.00Z" fill="#e6e5e1"/><path d="M64.77 3.20A57 57 0 1 1 22.23 102.69L34.82 88.46A38 38 0 1 0 63.18 22.13Z" fill="#9dd2cf"/><path d="M22.23 102.69A57 57 0 0 1 33.24 9.67L42.16 26.45A38 38 0 0 0 34.82 88.46Z" fill="#e6e5e1"/><path d="M33.24 9.67A57 57 0 0 1 59.01 3.01L59.34 22.01A38 38 0 0 0 42.16 26.45Z" fill="#e6e5e1"/><path d="M60.00 22.00L60.00 2.00" stroke="#f4f3f0" stroke-width="1.6"/><path d="M63.18 22.13L64.85 2.20" stroke="#f4f3f0" stroke-width="1.6"/><path d="M34.82 88.46L21.57 103.44" stroke="#f4f3f0" stroke-width="1.6"/><path d="M42.16 26.45L32.77 8.79" stroke="#f4f3f0" stroke-width="1.6"/><path d="M59.34 22.01L58.99 2.01" stroke="#f4f3f0" stroke-width="1.6"/></svg>
<svg style="left:560.5px;top:490.79999999999995px;" width="120" height="120" viewBox="0 0 120 120"><path d="M60.00 3.00A57 57 0 0 1 64.77 3.20L63.18 22.13A38 38 0 0 0 60.00 22.00Z" fill="#e6e5e1"/><path d="M64.77 3.20A57 57 0 1 1 22.23 102.69L34.82 88.46A38 38 0 1 0 63.18 22.13Z" fill="#e6e5e1"/><path d="M22.23 102.69A57 57 0 0 1 33.24 9.67L42.16 26.45A38 38 0 0 0 34.82 88.46Z" fill="#a3a3a1"/><path d="M33.24 9.67A57 57 0 0 1 59.01 3.01L59.34 22.01A38 38 0 0 0 42.16 26.45Z" fill="#e6e5e1"/><path d="M60.00 22.00L60.00 2.00" stroke="#f4f3f0" stroke-width="1.6"/><path d="M63.18 22.13L64.85 2.20" stroke="#f4f3f0" stroke-width="1.6"/><path d="M34.82 88.46L21.57 103.44" stroke="#f4f3f0" stroke-width="1.6"/><path d="M42.16 26.45L32.77 8.79" stroke="#f4f3f0" stroke-width="1.6"/><path d="M59.34 22.01L58.99 2.01" stroke="#f4f3f0" stroke-width="1.6"/></svg>
<svg style="left:699px;top:490.79999999999995px;" width="120" height="120" viewBox="0 0 120 120"><path d="M60.00 3.00A57 57 0 0 1 64.77 3.20L63.18 22.13A38 38 0 0 0 60.00 22.00Z" fill="#e6e5e1"/><path d="M64.77 3.20A57 57 0 1 1 22.23 102.69L34.82 88.46A38 38 0 1 0 63.18 22.13Z" fill="#e6e5e1"/><path d="M22.23 102.69A57 57 0 0 1 33.24 9.67L42.16 26.45A38 38 0 0 0 34.82 88.46Z" fill="#e6e5e1"/><path d="M33.24 9.67A57 57 0 0 1 59.01 3.01L59.34 22.01A38 38 0 0 0 42.16 26.45Z" fill="#8fbe73"/><path d="M60.00 22.00L60.00 2.00" stroke="#f4f3f0" stroke-width="1.6"/><path d="M63.18 22.13L64.85 2.20" stroke="#f4f3f0" stroke-width="1.6"/><path d="M34.82 88.46L21.57 103.44" stroke="#f4f3f0" stroke-width="1.6"/><path d="M42.16 26.45L32.77 8.79" stroke="#f4f3f0" stroke-width="1.6"/><path d="M59.34 22.01L58.99 2.01" stroke="#f4f3f0" stroke-width="1.6"/></svg>
<svg style="left:336px;top:535px;" width="12" height="32" viewBox="0 0 12 32"><rect x="3" y="3" width="6" height="19" fill="none" stroke="#d8302e" stroke-width="2"/><rect x="3.5" y="25.5" width="5" height="5" fill="none" stroke="#d8302e" stroke-width="2"/></svg>
<svg style="left:465px;top:533px;" width="32" height="40" viewBox="0 0 32 40"><path d="M13 5H27.5L20.5 14H26.5L4.5 36L11.5 21.5H5.5Z" fill="none" stroke="#5dc2c1" stroke-width="1.5" stroke-linejoin="miter"/></svg>
<svg style="left:604px;top:536px;" width="34" height="34" viewBox="0 0 34 34"><circle cx="17" cy="17" r="13.6" fill="none" stroke="#8f8f8f" stroke-width="1.5"/><path d="M16.5 8V17.5L21.5 19.5" fill="none" stroke="#8f8f8f" stroke-width="1.5"/></svg>
<svg style="left:745px;top:537px;" width="27" height="31" viewBox="0 0 27 31"><path d="M3.5 2.5H15.5L24 11V27.5H3.5Z" fill="none" stroke="#71ad59" stroke-width="2"/><path d="M15.5 2.5V11H24" fill="none" stroke="#71ad59" stroke-width="2"/></svg>
<div id="t42" class="t" style="top:614.33px;font-size:16.5px;line-height:16.5px;color:#d42a2a;font-weight:700;font-family:'Liberation Sans',sans-serif;white-space:pre;left:341px;transform:translateX(-50%) scaleX(0.9651);">Balance owing</div>
<div id="t43" class="t" style="top:634.98px;font-size:16.5px;line-height:16.5px;color:#d42a2a;font-weight:700;font-family:'Liberation Sans',sans-serif;white-space:pre;left:341px;transform:translateX(-50%) scaleX(0.9738);">from your</div>
<div id="t44" class="t" style="top:655.63px;font-size:16.5px;line-height:16.5px;color:#d42a2a;font-weight:700;font-family:'Liberation Sans',sans-serif;white-space:pre;left:341px;transform:translateX(-50%) scaleX(0.8794);">last bill</div>
<div id="t45" class="t" style="top:614.33px;font-size:16.5px;line-height:16.5px;color:#5dc2c1;font-weight:700;font-family:'Liberation Sans',sans-serif;white-space:pre;left:481px;transform:translateX(-50%) scaleX(0.9588);">Charge for</div>
<div id="t46" class="t" style="top:634.98px;font-size:16.5px;line-height:16.5px;color:#5dc2c1;font-weight:700;font-family:'Liberation Sans',sans-serif;white-space:pre;left:481px;transform:translateX(-50%) scaleX(0.9475);">electricity</div>
<div id="t47" class="t" style="top:655.63px;font-size:16.5px;line-height:16.5px;color:#5dc2c1;font-weight:700;font-family:'Liberation Sans',sans-serif;white-space:pre;left:481px;transform:translateX(-50%) scaleX(0.9525);">you used</div>
<div id="t48" class="t" style="top:614.33px;font-size:16.5px;line-height:16.5px;color:#707070;font-weight:700;font-family:'Liberation Sans',sans-serif;white-space:pre;left:620.5px;transform:translateX(-50%) scaleX(0.9275);">Your PEAK</div>
<div id="t49" class="t" style="top:634.98px;font-size:16.5px;line-height:16.5px;color:#707070;font-weight:700;font-family:'Liberation Sans',sans-serif;white-space:pre;left:620.5px;transform:translateX(-50%) scaleX(0.9475);">electricity</div>
<div id="t50" class="t" style="top:655.63px;font-size:16.5px;line-height:16.5px;color:#707070;font-weight:700;font-family:'Liberation Sans',sans-serif;white-space:pre;left:620.5px;transform:translateX(-50%) scaleX(0.9479);">charges</div>
<div id="t51" class="t" style="top:614.33px;font-size:16.5px;line-height:16.5px;color:#6aa954;font-weight:700;font-family:'Liberation Sans',sans-serif;white-space:pre;left:760px;transform:translateX(-50%) scaleX(0.9924);">Account</div>
<div id="t52" class="t" style="top:634.98px;font-size:16.5px;line-height:16.5px;color:#6aa954;font-weight:700;font-family:'Liberation Sans',sans-serif;white-space:pre;left:760px;transform:translateX(-50%) scaleX(0.9558);">charges</div>
<div id="t53" class="t" style="top:655.63px;font-size:16.5px;line-height:16.5px;color:#6aa954;font-weight:700;font-family:'Liberation Sans',sans-serif;white-space:pre;left:760px;transform:translateX(-50%) scaleX(0.9655);">and taxes</div>
<div style="left:872px;top:378px;width:325px;height:124px;background:#e2e9e7;"></div>
<div id="t54" class="t" style="top:400.42px;font-size:19px;line-height:19px;color:#38332f;font-weight:700;font-family:'Liberation Sans',sans-serif;white-space:pre;left:892px;transform:scaleX(1.1336);transform-origin:0 0;">Total amount due by</div>
<div id="t55" class="t" style="top:423.42px;font-size:19px;line-height:19px;color:#38332f;font-weight:700;font-family:'Liberation Sans',sans-serif;white-space:pre;left:892px;transform:scaleX(1.1413);transform-origin:0 0;">Mar 31, 2020</div>
<div id="t56" class="t" style="top:451.95px;font-size:29px;line-height:29px;color:#38332f;font-weight:400;font-family:'Liberation Sans',sans-serif;white-space:pre;left:908px;transform:scaleX(1.1161);transform-origin:0 0;-webkit-text-stroke:0.5px #38332f;">$560.00</div>
<svg style="left:871px;top:524px;" width="22" height="22" viewBox="0 0 22 22"><circle cx="11" cy="11" r="8.6" fill="none" stroke="#8c8c8c" stroke-width="1.4"/><path d="M10.5 5.5V11.5L14 13" fill="none" stroke="#8c8c8c" stroke-width="1.4"/></svg>
<div id="t57" class="t" style="top:525.23px;font-size:14.5px;line-height:14.5px;color:#555555;font-weight:400;font-family:'Liberation Sans',sans-serif;white-space:pre;left:905px;transform:scaleX(1.0102);transform-origin:0 0;-webkit-text-stroke:0.5px #555555;"><span style="font-weight:700;">26%</span><span style="font-weight:400;"> of your bill comes from PEAK electricity</span></div>
<div id="t58" class="t" style="top:545.73px;font-size:14.5px;line-height:14.5px;color:#555555;font-weight:400;font-family:'Liberation Sans',sans-serif;white-space:pre;left:905px;transform:scaleX(0.9729);transform-origin:0 0;-webkit-text-stroke:0.5px #555555;"><span style="font-weight:400;">charges. Visit </span><span style="font-weight:700;">hydrocan.ca/peaktips</span><span style="font-weight:400;"> for</span></div>
<div id="t59" class="t" style="top:566.23px;font-size:14.5px;line-height:14.5px;color:#555555;font-weight:400;font-family:'Liberation Sans',sans-serif;white-space:pre;left:905px;transform:scaleX(1.0075);transform-origin:0 0;-webkit-text-stroke:0.5px #555555;"><span style="font-weight:400;">advice and tips to help you avoid PEAK</span></div>
<div id="t60" class="t" style="top:586.93px;font-size:14.5px;line-height:14.5px;color:#555555;font-weight:400;font-family:'Liberation Sans',sans-serif;white-space:pre;left:905px;transform:scaleX(1.0160);transform-origin:0 0;-webkit-text-stroke:0.5px #555555;"><span style="font-weight:400;">electricity charges.</span></div>
<svg style="left:870px;top:618px;" width="22" height="25" viewBox="0 0 22 25"><path d="M2.5 2H13L19 8V22.5H2.5Z" fill="none" stroke="#74b05c" stroke-width="1.6"/><path d="M13 2V8H19" fill="none" stroke="#74b05c" stroke-width="1.6"/></svg>
<div id="t61" class="t" style="top:617.93px;font-size:14.5px;line-height:14.5px;color:#555555;font-weight:400;font-family:'Liberation Sans',sans-serif;white-space:pre;left:905px;transform:scaleX(0.9828);transform-origin:0 0;-webkit-text-stroke:0.5px #555555;"><span style="font-weight:400;">You are enrolled in our Power Saver Program.</span></div>
<div id="t62" class="t" style="top:638.33px;font-size:14.5px;line-height:14.5px;color:#555555;font-weight:400;font-family:'Liberation Sans',sans-serif;white-space:pre;left:905px;transform:scaleX(1.0264);transform-origin:0 0;-webkit-text-stroke:0.5px #555555;"><span style="font-weight:400;">The program and the discounts</span></div>
<div id="t63" class="t" style="top:659.03px;font-size:14.5px;line-height:14.5px;color:#555555;font-weight:400;font-family:'Liberation Sans',sans-serif;white-space:pre;left:905px;transform:scaleX(0.9948);transform-origin:0 0;-webkit-text-stroke:0.5px #555555;"><span style="font-weight:400;">Associated with it will end on May 4, 2020.</span></div>
<div id="t64" class="t" style="top:679.73px;font-size:14.5px;line-height:14.5px;color:#555555;font-weight:400;font-family:'Liberation Sans',sans-serif;white-space:pre;left:905px;transform:scaleX(0.9461);transform-origin:0 0;-webkit-text-stroke:0.5px #555555;"><span style="font-weight:400;font-style:italic;">&gt; See page 3 for more details about your</span></div>
<div id="t65" class="t" style="top:700.53px;font-size:14.5px;line-height:14.5px;color:#555555;font-weight:400;font-family:'Liberation Sans',sans-serif;white-space:pre;left:905px;transform:scaleX(1.0006);transform-origin:0 0;-webkit-text-stroke:0.5px #555555;"><span style="font-weight:400;font-style:italic;">payment programs.</span></div>
<div style="left:281.5px;top:731.5px;width:915px;height:1.6px;background:#b9b8b5;"></div>
<div id="t66" class="t" style="top:753.55px;font-size:22.5px;line-height:22.5px;color:#22b2ae;font-weight:700;font-family:'Liberation Sans',sans-serif;white-space:pre;left:282.3px;transform:scaleX(1.0216);transform-origin:0 0;-webkit-text-stroke:0.6px #22b2ae;">Your usage compared to last year</div>
<div id="t67" class="t" style="top:787.80px;font-size:15px;line-height:15px;color:#5a5a5a;font-weight:700;font-family:'Liberation Sans',sans-serif;white-space:pre;left:282px;transform:scaleX(1.0734);transform-origin:0 0;">We’ve included more details about your usage on page 2.</div>
<svg style="left:869px;top:759px;" width="34" height="41" viewBox="0 0 34 41"><rect x="1.8" y="1.3" width="30" height="38.5" rx="4" fill="none" stroke="#25b0ac" stroke-width="1.5"/><rect x="5.5" y="5" width="23" height="7" fill="none" stroke="#25b0ac" stroke-width="1.4"/><rect x="5.5" y="16.0" width="5" height="5" fill="none" stroke="#25b0ac" stroke-width="1.3"/><rect x="13.5" y="16.0" width="5" height="5" fill="none" stroke="#25b0ac" stroke-width="1.3"/><rect x="21.5" y="16.0" width="5" height="5" fill="none" stroke="#25b0ac" stroke-width="1.3"/><rect x="5.5" y="23.5" width="5" height="5" fill="none" stroke="#25b0ac" stroke-width="1.3"/><rect x="13.5" y="23.5" width="5" height="5" fill="none" stroke="#25b0ac" stroke-width="1.3"/><rect x="5.5" y="31.0" width="5" height="5" fill="none" stroke="#25b0ac" stroke-width="1.3"/><rect x="13.5" y="31.0" width="5" height="5" fill="none" stroke="#25b0ac" stroke-width="1.3"/><rect x="21.5" y="23.5" width="6" height="12.5" fill="none" stroke="#25b0ac" stroke-width="1.3"/></svg>
<div id="t68" class="t" style="top:759.99px;font-size:19.5px;line-height:19.5px;color:#22aeaa;font-weight:400;font-family:'Liberation Sans',sans-serif;white-space:pre;left:911.7px;transform:scaleX(0.9570);transform-origin:0 0;-webkit-text-stroke:0.3px #22aeaa;">Find ways to save energy -</div>
<div id="t69" class="t" style="top:783.49px;font-size:19.5px;line-height:19.5px;color:#22aeaa;font-weight:400;font-family:'Liberation Sans',sans-serif;white-space:pre;left:911.7px;transform:scaleX(0.9224);transform-origin:0 0;-webkit-text-stroke:0.3px #22aeaa;">use our</div>
<div id="t70" class="t" style="top:783.49px;font-size:19.5px;line-height:19.5px;color:#22aeaa;font-weight:700;font-family:'Liberation Sans',sans-serif;white-space:pre;left:978.6px;transform:scaleX(0.9042);transform-origin:0 0;">EnergyCalculator</div>
<div style="left:1578px;top:110px;width:20px;height:709px;background:#484848;"></div>
<div style="left:1578px;top:110px;width:4px;height:709px;background:#3c3c3c;"></div>
<div style="left:1582.6px;top:301.8px;width:13.3px;height:185.5px;background:#686868;border-radius:2px;"></div>
<svg style="left:1583px;top:118px;" width="12" height="8" viewBox="0 0 12 8"><path d="M1 7L6 2L11 7" fill="none" stroke="#777" stroke-width="1.2"/></svg>
<svg style="left:1583px;top:801px;" width="12" height="8" viewBox="0 0 12 8"><path d="M1 1L6 6L11 1" fill="none" stroke="#777" stroke-width="1.2"/></svg>
<div style="left:1598px;top:110px;width:2px;height:729px;background:#383838;"></div>
<div style="left:1240px;top:227px;width:60px;height:300px;background:#535353;border-radius:5px 0 0 0;border:1px solid #2e2e2e;box-shadow:-2px 1px 4px rgba(0,0,0,0.18);"></div>
<div style="left:1241px;top:228px;width:59px;height:15px;background:#434343;border-radius:5px 0 0 0;"></div>
<div id="t71" class="t" style="top:253.00px;font-size:13px;line-height:13px;color:#f0f0f0;font-weight:700;font-family:'Liberation Sans',sans-serif;white-space:pre;left:1253px;">Chara</div>
<div style="left:1248px;top:292px;width:50px;height:25px;background:#454545;border:1px solid #3d3d3d;border-radius:3px;"></div>
<div id="t72" class="t" style="top:299.00px;font-size:13px;line-height:13px;color:#e6e6e6;font-weight:400;font-family:'Liberation Sans',sans-serif;white-space:pre;left:1252px;">Monts</div>
<div id="t73" class="t" style="top:336.54px;font-size:10px;line-height:10px;color:#d6d6d6;font-weight:400;font-family:'Liberation Serif',sans-serif;white-space:pre;left:1247px;">T</div>
<div id="t74" class="t" style="top:329.07px;font-size:20px;line-height:20px;color:#d6d6d6;font-weight:400;font-family:'Liberation Serif',sans-serif;white-space:pre;left:1254px;">T</div>
<div id="t75" class="t" style="top:358.15px;font-size:14px;line-height:14px;color:#d6d6d6;font-weight:400;font-family:'Liberation Sans',sans-serif;white-space:pre;left:1246px;">V/A</div>
<svg style="left:1253px;top:369px;" width="14" height="6" viewBox="0 0 14 6"><path d="M13 3H2M4 1L1.5 3L4 5" fill="none" stroke="#d6d6d6" stroke-width="1.2"/></svg>
<svg style="left:1247px;top:379px;" width="8" height="18" viewBox="0 0 8 18"><path d="M4 2V16M1 5L4 1.5L7 5M1 13L4 16.5L7 13" fill="none" stroke="#d6d6d6" stroke-width="1.4"/></svg>
<div id="t76" class="t" style="top:378.22px;font-size:21px;line-height:21px;color:#d6d6d6;font-weight:400;font-family:'Liberation Serif',sans-serif;white-space:pre;left:1256px;">T</div>
<div id="t77" class="t" style="top:404.00px;font-size:13px;line-height:13px;color:#d6d6d6;font-weight:400;font-family:'Liberation Sans',sans-serif;white-space:pre;left:1247px;">A</div>
<div style="left:1247px;top:417px;width:11px;height:1px;background:#d6d6d6;"></div>
<div id="t78" class="t" style="top:402.54px;font-size:10px;line-height:10px;color:#d6d6d6;font-weight:400;font-family:'Liberation Sans',sans-serif;white-space:pre;left:1261px;">a</div>
<svg style="left:1259px;top:413px;" width="11" height="10" viewBox="0 0 11 10"><path d="M1 1.5H10M5.5 9.5V4M3.5 6L5.5 3.5L7.5 6" fill="none" stroke="#d6d6d6" stroke-width="1.1"/></svg>
<div style="left:1272px;top:327px;width:28px;height:19px;background:#444;border:1px solid #3c3c3c;border-radius:3px;"></div>
<div style="left:1272px;top:352px;width:28px;height:19px;background:#444;border:1px solid #3c3c3c;border-radius:3px;"></div>
<div style="left:1272px;top:378px;width:28px;height:19px;background:#444;border:1px solid #3c3c3c;border-radius:3px;"></div>
<div style="left:1272px;top:404px;width:28px;height:19px;background:#444;border:1px solid #3c3c3c;border-radius:3px;"></div>
<div id="t79" class="t" style="top:331.00px;font-size:13px;line-height:13px;color:#e0e0e0;font-weight:400;font-family:'Liberation Sans',sans-serif;white-space:pre;left:1276px;">3</div>
<div id="t80" class="t" style="top:356.00px;font-size:13px;line-height:13px;color:#e0e0e0;font-weight:400;font-family:'Liberation Sans',sans-serif;white-space:pre;left:1276px;">M</div>
<div id="t81" class="t" style="top:382.00px;font-size:13px;line-height:13px;color:#e0e0e0;font-weight:400;font-family:'Liberation Sans',sans-serif;white-space:pre;left:1276px;">1</div>
<div id="t82" class="t" style="top:408.00px;font-size:13px;line-height:13px;color:#e0e0e0;font-weight:400;font-family:'Liberation Sans',sans-serif;white-space:pre;left:1276px;">0</div>
<div id="t83" class="t" style="top:434.61px;font-size:17px;line-height:17px;color:#d6d6d6;font-weight:700;font-family:'Liberation Serif',sans-serif;white-space:pre;left:1262px;">T</div>
<div style="left:1257px;top:464px;width:30px;height:28px;background:#3a3a3a;border-radius:3px;"></div>
<div id="t84" class="t" style="top:469.22px;font-size:21px;line-height:21px;color:#e6e6e6;font-weight:400;font-family:'Liberation Serif',sans-serif;white-space:pre;left:1262px;">fi</div>
<div style="left:1248px;top:500px;width:50px;height:21px;background:#474747;border:1px solid #3d3d3d;border-radius:3px;"></div>
<div id="t85" class="t" style="top:505.00px;font-size:13px;line-height:13px;color:#e6e6e6;font-weight:400;font-family:'Liberation Sans',sans-serif;white-space:pre;left:1257px;transform:scaleX(0.93);transform-origin:0 0;">Englis</div>
<div style="left:1285px;top:114px;width:296px;height:696px;background:#535353;border:1px solid #2a2a2a;border-radius:5px 5px 0 0;"></div>
<div style="left:1286px;top:115px;width:294px;height:16px;background:#434343;border-radius:5px 5px 0 0;"></div>
<div id="t86" class="t" style="top:118.53px;font-size:10px;line-height:10px;color:#e6e6e6;font-weight:700;font-family:'Liberation Sans',sans-serif;white-space:pre;left:1543.5px;">&lt;&lt;</div>
<svg style="left:1566px;top:119.5px;" width="10" height="10" viewBox="0 0 10 10"><path d="M1 1L9 9M9 1L1 9" stroke="#e0e0e0" stroke-width="1.5"/></svg>
<div style="left:1286px;top:131px;width:294px;height:35px;background:#434343;"></div>
<div style="left:1286px;top:165px;width:294px;height:1px;background:#3a3a3a;"></div>
<div style="left:1322px;top:131px;width:1px;height:34px;background:#3a3a3a;"></div>
<div style="left:1359px;top:131px;width:1px;height:34px;background:#3a3a3a;"></div>
<div style="left:1395px;top:131px;width:1px;height:34px;background:#3a3a3a;"></div>
<div style="left:1431px;top:131px;width:1px;height:34px;background:#3a3a3a;"></div>
<div style="left:1467px;top:131px;width:1px;height:34px;background:#3a3a3a;"></div>
<div style="left:1468px;top:131px;width:58px;height:35px;background:#535353;"></div>
<div style="left:1526px;top:131px;width:1px;height:34px;background:#3a3a3a;"></div>
<div style="left:1297px;top:136px;width:31px;height:24px;overflow:hidden;"><div class="t" style="position:absolute;left:1px;top:5.00px;font-size:13px;line-height:13px;color:#a9a9a9;font-weight:700;white-space:pre;">Lear</div></div>
<div style="left:1333px;top:136px;width:29px;height:24px;overflow:hidden;"><div class="t" style="position:absolute;left:1px;top:5.00px;font-size:13px;line-height:13px;color:#a9a9a9;font-weight:700;white-space:pre;">Librä</div></div>
<div style="left:1369px;top:136px;width:28px;height:24px;overflow:hidden;"><div class="t" style="position:absolute;left:1px;top:5.00px;font-size:13px;line-height:13px;color:#a9a9a9;font-weight:700;white-space:pre;">Chai</div></div>
<div style="left:1405px;top:136px;width:28px;height:24px;overflow:hidden;"><div class="t" style="position:absolute;left:1px;top:5.00px;font-size:13px;line-height:13px;color:#a9a9a9;font-weight:700;white-space:pre;">Path</div></div>
<div style="left:1441px;top:136px;width:27px;height:24px;overflow:hidden;"><div class="t" style="position:absolute;left:1px;top:5.00px;font-size:13px;line-height:13px;color:#a9a9a9;font-weight:700;white-space:pre;">Adju</div></div>
<div id="t87" class="t" style="top:141.00px;font-size:13px;line-height:13px;color:#f2f2f2;font-weight:700;font-family:'Liberation Sans',sans-serif;white-space:pre;left:1478.5px;transform:scaleX(0.8826);transform-origin:0 0;">Layers</div>
<div style="left:1561px;top:143px;width:13px;height:1.5px;background:#dcdcdc;"></div>
<div style="left:1561px;top:146px;width:13px;height:1.5px;background:#dcdcdc;"></div>
<div style="left:1561px;top:149px;width:13px;height:1.5px;background:#dcdcdc;"></div>
<div style="left:1561px;top:152px;width:13px;height:1.5px;background:#dcdcdc;"></div>
<div style="left:1286px;top:205px;width:294px;height:2px;background:#454545;"></div>
<div style="left:1291px;top:177px;width:107px;height:23px;background:#474747;border:1px solid #3e3e3e;border-radius:4px;"></div>
<svg style="left:1300px;top:182px;" width="15" height="15" viewBox="0 0 15 15"><circle cx="6" cy="6" r="4.5" fill="none" stroke="#e6e6e6" stroke-width="1.7"/><path d="M9 9L13.5 13.5" stroke="#e6e6e6" stroke-width="2"/></svg>
<div id="t88" class="t" style="top:183.00px;font-size:13px;line-height:13px;color:#e6e6e6;font-weight:400;font-family:'Liberation Sans',sans-serif;white-space:pre;left:1318px;transform:scaleX(0.9604);transform-origin:0 0;">Kind</div>
<svg style="left:1385px;top:187px;" width="9" height="6" viewBox="0 0 9 6"><path d="M1 1L4.5 4.5L8 1" fill="none" stroke="#bdbdbd" stroke-width="1.2"/></svg>
<svg style="left:1413px;top:182px;" width="17" height="14" viewBox="0 0 17 14"><rect x="1" y="1" width="15" height="12" fill="none" stroke="#dedede" stroke-width="1.4"/><path d="M3 11L6.5 6L8.5 9L11 6.5L14 11Z" fill="#dedede"/></svg>
<svg style="left:1443px;top:181px;" width="16" height="16" viewBox="0 0 16 16"><circle cx="8" cy="8" r="6.8" fill="none" stroke="#dedede" stroke-width="1.5"/><path d="M12.8 3.2A6.8 6.8 0 0 1 3.2 12.8Z" fill="#dedede"/></svg>
<div id="t89" class="t" style="top:180.61px;font-size:17px;line-height:17px;color:#dedede;font-weight:700;font-family:'Liberation Serif',sans-serif;white-space:pre;left:1474px;">T</div>
<svg style="left:1503px;top:181px;" width="17" height="17" viewBox="0 0 17 17"><rect x="2.5" y="2.5" width="12" height="12" fill="none" stroke="#dedede" stroke-width="1.4"/><circle cx="2.5" cy="2.5" r="1.6" fill="#535353" stroke="#dedede" stroke-width="1.2"/><circle cx="14.5" cy="2.5" r="1.6" fill="#535353" stroke="#dedede" stroke-width="1.2"/><circle cx="2.5" cy="14.5" r="1.6" fill="#535353" stroke="#dedede" stroke-width="1.2"/><circle cx="14.5" cy="14.5" r="1.6" fill="#535353" stroke="#dedede" stroke-width="1.2"/></svg>
<svg style="left:1534px;top:181px;" width="17" height="17" viewBox="0 0 17 17"><path d="M5 1H11L15 5V14H9" fill="none" stroke="#dedede" stroke-width="1.3"/><path d="M11 1V5H15" fill="none" stroke="#dedede" stroke-width="1.1"/><rect x="1" y="8" width="8" height="8" fill="#dedede"/></svg>
<div style="left:1564px;top:178px;width:11px;height:22px;border:1px solid #3e3e3e;border-radius:6px;background:#4a4a4a;"></div>
<div style="left:1563.5px;top:177.5px;width:11px;height:11px;background:#e4e4e4;border-radius:50%;"></div>
<div style="left:1286px;top:239px;width:294px;height:1.5px;background:#454545;"></div>
<div style="left:1291px;top:212px;width:160px;height:23px;background:#474747;border:1px solid #3e3e3e;border-radius:4px;"></div>
<div id="t90" class="t" style="top:218.00px;font-size:13px;line-height:13px;color:#e6e6e6;font-weight:400;font-family:'Liberation Sans',sans-serif;white-space:pre;left:1301px;transform:scaleX(0.9545);transform-origin:0 0;">Normal</div>
<svg style="left:1438px;top:222px;" width="9" height="6" viewBox="0 0 9 6"><path d="M1 1L4.5 4.5L8 1" fill="none" stroke="#bdbdbd" stroke-width="1.2"/></svg>
<div id="t91" class="t" style="top:218.00px;font-size:13px;line-height:13px;color:#c8c8c8;font-weight:400;font-family:'Liberation Sans',sans-serif;white-space:pre;left:1460px;transform:scaleX(0.9646);transform-origin:0 0;">Opacity:</div>
<div style="left:1512px;top:213px;width:61px;height:22px;background:#474747;border:1px solid #3e3e3e;border-radius:4px;"></div>
<div style="left:1555px;top:214px;width:1px;height:20px;background:#3a3a3a;"></div>
<div id="t92" class="t" style="top:218.00px;font-size:13px;line-height:13px;color:#eaeaea;font-weight:400;font-family:'Liberation Sans',sans-serif;white-space:pre;left:1517px;transform:scaleX(0.9604);transform-origin:0 0;">29%</div>
<svg style="left:1560px;top:222px;" width="9" height="6" viewBox="0 0 9 6"><path d="M1 1L4.5 4.5L8 1" fill="none" stroke="#bdbdbd" stroke-width="1.2"/></svg>
<div id="t93" class="t" style="top:252.00px;font-size:13px;line-height:13px;color:#c8c8c8;font-weight:400;font-family:'Liberation Sans',sans-serif;white-space:pre;left:1293px;transform:scaleX(0.9653);transform-origin:0 0;">Lock:</div>
<svg style="left:1334px;top:251px;" width="15" height="15" viewBox="0 0 15 15"><rect x="1" y="1" width="13" height="13" fill="none" stroke="#dedede" stroke-width="1.2"/><rect x="1.5" y="1.5" width="4" height="4" fill="#dedede"/><rect x="9.5" y="1.5" width="4" height="4" fill="#dedede"/><rect x="5.5" y="5.5" width="4" height="4" fill="#dedede"/><rect x="1.5" y="9.5" width="4" height="4" fill="#dedede"/><rect x="9.5" y="9.5" width="4" height="4" fill="#dedede"/></svg>
<svg style="left:1361px;top:249px;" width="18" height="19" viewBox="0 0 18 19"><path d="M16 1L8 10L10 12Z" fill="#dedede"/><path d="M7 11C4 11 3 14 1 18C5 17 9 16 9 13Z" fill="#dedede"/></svg>
<svg style="left:1387px;top:250px;" width="18" height="18" viewBox="0 0 18 18"><path d="M9 2V16M2 9H16" stroke="#dedede" stroke-width="1.5"/><path d="M9 0L6 3.5H12ZM9 18L6 14.5H12ZM0 9L3.5 6V12ZM18 9L14.5 6V12Z" fill="#dedede"/></svg>
<svg style="left:1414px;top:250px;" width="20" height="19" viewBox="0 0 20 19"><path d="M4 4H13L16 7V15H4Z" fill="none" stroke="#dedede" stroke-width="1.4"/><path d="M1 4H3M4 1V3M17 15H19M16 16V18M4 16V18M1 15H3M17 4H19" stroke="#dedede" stroke-width="1"/></svg>
<svg style="left:1443px;top:249px;" width="16" height="18" viewBox="0 0 16 18"><path d="M4 8V5.5a4 4 0 0 1 8 0V8" fill="none" stroke="#dedede" stroke-width="1.8"/><rect x="2" y="8" width="12" height="9" rx="1" fill="#dedede"/><circle cx="8" cy="12.5" r="1.3" fill="#535353"/></svg>
<div id="t94" class="t" style="top:252.00px;font-size:13px;line-height:13px;color:#c8c8c8;font-weight:400;font-family:'Liberation Sans',sans-serif;white-space:pre;left:1489px;transform:scaleX(0.8408);transform-origin:0 0;">Fill:</div>
<div style="left:1512px;top:248px;width:61px;height:20px;background:#474747;border:1px solid #3e3e3e;border-radius:4px;"></div>
<div style="left:1555px;top:249px;width:1px;height:18px;background:#3a3a3a;"></div>
<div id="t95" class="t" style="top:252.00px;font-size:13px;line-height:13px;color:#eaeaea;font-weight:400;font-family:'Liberation Sans',sans-serif;white-space:pre;left:1517px;transform:scaleX(0.9604);transform-origin:0 0;">47%</div>
<svg style="left:1560px;top:256px;" width="9" height="6" viewBox="0 0 9 6"><path d="M1 1L4.5 4.5L8 1" fill="none" stroke="#bdbdbd" stroke-width="1.2"/></svg>
<div style="left:1286px;top:278px;width:294px;height:491px;background:#4a4a4a;"></div>
<div style="left:1286px;top:278.5px;width:276px;height:30px;background:#535353;"></div>
<div style="left:1286px;top:278.5px;width:37px;height:30px;background:#52709c;"></div>
<svg style="left:1296.5px;top:288.2px;" width="18" height="12" viewBox="0 0 18 12"><path d="M1 6Q9 -3 17 6Q9 15 1 6Z" fill="#eef0f4"/><circle cx="9" cy="6" r="3.7" fill="#52709c"/><circle cx="10.1" cy="4.6" r="0.8" fill="#eef0f4"/></svg>
<svg style="left:1328px;top:289.5px;" width="11" height="7" viewBox="0 0 11 7"><path d="M1 1L5.5 5.5L10 1" fill="none" stroke="#bdbdbd" stroke-width="1.1"/></svg>
<svg style="left:1343px;top:286.0px;" width="19" height="15" viewBox="0 0 19 15"><path d="M1 1.5H7.5L9 3.5H18V13.5H1Z" fill="#e0e0e0"/><path d="M1 6H18" stroke="#535353" stroke-width="1.3"/><path d="M2.3 4.5V6" stroke="#535353"/></svg>
<div id="t96" class="t" style="top:287.50px;font-size:13px;line-height:13px;color:#ececec;font-weight:400;font-family:'Liberation Sans',sans-serif;white-space:pre;left:1376.5px;transform:scaleX(0.9445);transform-origin:0 0;">Scanned effect</div>
<div style="left:1286px;top:310px;width:276px;height:48.5px;background:#696969;"></div>
<div style="left:1286px;top:310px;width:37px;height:48.5px;background:#52709c;"></div>
<svg style="left:1296.5px;top:328.95px;" width="18" height="12" viewBox="0 0 18 12"><path d="M1 6Q9 -3 17 6Q9 15 1 6Z" fill="#eef0f4"/><circle cx="9" cy="6" r="3.7" fill="#52709c"/><circle cx="10.1" cy="4.6" r="0.8" fill="#eef0f4"/></svg>
<div style="left:1347.5px;top:314px;width:35px;height:42px;background:#2e2e2e;"></div>
<svg style="left:1349.8px;top:316px;" width="30.5" height="38.2" viewBox="0 0 30.5 38.2"><rect width="30.5" height="38.2" fill="#cbbd93"/><path d="M9.7 5.7L11.2 8.2L11.6 12.8L7.2 18.4" fill="none" stroke="#8d8466" stroke-width="0.7" opacity="0.75"/><path d="M1.1 16.5L-3.2 19.1L-3.9 26.9L-7.7 30.5" fill="none" stroke="#8d8466" stroke-width="0.7" opacity="0.75"/><path d="M18.8 36.0L19.6 40.8L24.4 43.1L27.9 47.1" fill="none" stroke="#8d8466" stroke-width="0.7" opacity="0.75"/><path d="M4.3 4.5L2.4 12.2L-0.8 18.3L0.6 22.9" fill="none" stroke="#8d8466" stroke-width="0.7" opacity="0.75"/><path d="M16.4 2.4L12.0 5.8L13.8 10.8L12.0 16.9" fill="none" stroke="#8d8466" stroke-width="0.7" opacity="0.75"/><path d="M13.6 11.4L16.5 18.3L14.0 24.3L14.2 32.4" fill="none" stroke="#8d8466" stroke-width="0.7" opacity="0.75"/><path d="M21.9 10.9L26.7 13.8L25.9 21.1L22.4 26.5" fill="none" stroke="#8d8466" stroke-width="0.7" opacity="0.75"/><path d="M1.2 25.4L3.8 31.4L7.6 35.6L9.5 41.8" fill="none" stroke="#8d8466" stroke-width="0.7" opacity="0.75"/><path d="M17.4 17.3L20.8 25.9L20.5 32.6L16.1 39.5" fill="none" stroke="#8d8466" stroke-width="0.7" opacity="0.75"/><path d="M19.4 37.7L22.6 41.7L21.5 48.4L16.7 53.6" fill="none" stroke="#8d8466" stroke-width="0.7" opacity="0.75"/><path d="M5.0 4.4L0.6 11.8L-3.1 15.6L-4.2 23.7" fill="none" stroke="#8d8466" stroke-width="0.7" opacity="0.75"/><path d="M2.4 17.1L2.9 25.3L6.1 33.3L3.9 38.2" fill="none" stroke="#8d8466" stroke-width="0.7" opacity="0.75"/><path d="M10.8 33.6L15.3 36.7L12.1 40.3L9.4 45.7" fill="none" stroke="#8d8466" stroke-width="0.7" opacity="0.75"/><path d="M17.7 10.0L12.7 14.9L11.4 20.9L15.9 27.7" fill="none" stroke="#8d8466" stroke-width="0.7" opacity="0.75"/><path d="M15.5 23.5L17.2 25.8L21.2 33.3L25.0 40.9" fill="none" stroke="#8d8466" stroke-width="0.7" opacity="0.75"/><path d="M11.8 15.2L7.8 21.6L3.4 24.1L0.5 27.2" fill="none" stroke="#8d8466" stroke-width="0.7" opacity="0.75"/><path d="M10.2 2.0L5.2 5.1L1.2 9.6L-3.5 17.7" fill="none" stroke="#8d8466" stroke-width="0.7" opacity="0.75"/><path d="M18.4 5.6L15.9 10.1L14.6 12.9L18.1 21.9" fill="none" stroke="#8d8466" stroke-width="0.7" opacity="0.75"/><path d="M14.0 18.4L9.8 21.1L8.3 25.0L11.6 28.1" fill="none" stroke="#8d8466" stroke-width="0.7" opacity="0.75"/><path d="M0.7 36.1L1.0 39.2L1.4 41.4L1.7 50.2" fill="none" stroke="#8d8466" stroke-width="0.7" opacity="0.75"/><path d="M25.9 26.5L23.5 31.0L20.2 38.4L20.5 45.9" fill="none" stroke="#8d8466" stroke-width="0.7" opacity="0.75"/><path d="M9.9 8.5L13.0 17.4L16.5 25.0L19.7 32.2" fill="none" stroke="#8d8466" stroke-width="0.7" opacity="0.75"/><path d="M6.8 19.7L5.4 21.9L0.6 25.8L-1.8 32.7" fill="none" stroke="#8d8466" stroke-width="0.7" opacity="0.75"/><path d="M28.7 17.0L33.1 25.9L37.6 30.5L34.8 34.1" fill="none" stroke="#8d8466" stroke-width="0.7" opacity="0.75"/><path d="M5.9 7.8L7.1 16.1L10.5 21.4L12.1 29.0" fill="none" stroke="#8d8466" stroke-width="0.7" opacity="0.75"/><path d="M2.5 25.1L6.6 32.6L9.1 37.9L5.9 45.4" fill="none" stroke="#8d8466" stroke-width="0.7" opacity="0.75"/></svg>
<svg style="left:1345px;top:311.5px;" width="40" height="48" viewBox="0 0 40 48"><path d="M1.5 16V1.5H13M27 1.5H38.5V16M1.5 32V46.5H13M27 46.5H38.5V32" fill="none" stroke="#e8e8e8" stroke-width="1.5"/></svg>
<div id="t97" class="t" style="top:328.00px;font-size:13px;line-height:13px;color:#ececec;font-weight:400;font-family:'Liberation Sans',sans-serif;white-space:pre;left:1392.3px;transform:scaleX(0.9618);transform-origin:0 0;">Background copy 22</div>
<div style="left:1286px;top:360.5px;width:276px;height:50px;background:#535353;"></div>
<div style="left:1286px;top:360.5px;width:37px;height:50px;background:#52709c;"></div>
<svg style="left:1296.5px;top:380.2px;" width="18" height="12" viewBox="0 0 18 12"><path d="M1 6Q9 -3 17 6Q9 15 1 6Z" fill="#eef0f4"/><circle cx="9" cy="6" r="3.7" fill="#52709c"/><circle cx="10.1" cy="4.6" r="0.8" fill="#eef0f4"/></svg>
<div style="left:1328.5px;top:366.5px;width:32.5px;height:40px;border:1.5px solid #262626;background-color:#fff;background-image:linear-gradient(45deg,#ddd 25%,transparent 25%,transparent 75%,#ddd 75%),linear-gradient(45deg,#ddd 25%,transparent 25%,transparent 75%,#ddd 75%);background-size:9px 9px;background-position:0 0,4.5px 4.5px;"></div>
<div id="t98" class="t" style="top:379.50px;font-size:13px;line-height:13px;color:#ececec;font-weight:400;font-family:'Liberation Sans',sans-serif;white-space:pre;left:1372.6px;transform:scaleX(0.9543);transform-origin:0 0;">Logo</div>
<svg style="left:1527px;top:377.5px;" width="15" height="16" viewBox="0 0 15 16"><path d="M4 7V5a3.5 3.5 0 0 1 7 0V7" fill="none" stroke="#d4d4d4" stroke-width="1.4"/><rect x="1.5" y="7" width="12" height="8" fill="none" stroke="#d4d4d4" stroke-width="1.4"/><circle cx="7.5" cy="11" r="1.2" fill="#d4d4d4"/></svg>
<div style="left:1286px;top:412px;width:276px;height:50px;background:#535353;"></div>
<div style="left:1286px;top:412px;width:37px;height:50px;background:#52709c;"></div>
<svg style="left:1296.5px;top:431.7px;" width="18" height="12" viewBox="0 0 18 12"><path d="M1 6Q9 -3 17 6Q9 15 1 6Z" fill="#eef0f4"/><circle cx="9" cy="6" r="3.7" fill="#52709c"/><circle cx="10.1" cy="4.6" r="0.8" fill="#eef0f4"/></svg>
<div style="left:1328.5px;top:418px;width:32.5px;height:40px;border:1.5px solid #262626;background-color:#fff;background-image:linear-gradient(45deg,#ddd 25%,transparent 25%,transparent 75%,#ddd 75%),linear-gradient(45deg,#ddd 25%,transparent 25%,transparent 75%,#ddd 75%);background-size:9px 9px;background-position:0 0,4.5px 4.5px;"></div>
<div id="t99" class="t" style="top:431.00px;font-size:13px;line-height:13px;color:#ececec;font-weight:400;font-family:'Liberation Sans',sans-serif;white-space:pre;left:1372.6px;transform:scaleX(1.0265);transform-origin:0 0;">Logo bottom</div>
<svg style="left:1527px;top:429.0px;" width="15" height="16" viewBox="0 0 15 16"><path d="M4 7V5a3.5 3.5 0 0 1 7 0V7" fill="none" stroke="#d4d4d4" stroke-width="1.4"/><rect x="1.5" y="7" width="12" height="8" fill="none" stroke="#d4d4d4" stroke-width="1.4"/><circle cx="7.5" cy="11" r="1.2" fill="#d4d4d4"/></svg>
<div style="left:1286px;top:463.3px;width:276px;height:29.5px;background:#535353;"></div>
<div style="left:1286px;top:463.3px;width:37px;height:29.5px;background:#5e823c;"></div>
<svg style="left:1296.5px;top:472.75px;" width="18" height="12" viewBox="0 0 18 12"><path d="M1 6Q9 -3 17 6Q9 15 1 6Z" fill="#eef0f4"/><circle cx="9" cy="6" r="3.7" fill="#5e823c"/><circle cx="10.1" cy="4.6" r="0.8" fill="#eef0f4"/></svg>
<svg style="left:1330px;top:472.05px;" width="6" height="12" viewBox="0 0 6 12"><path d="M1 1L5 6L1 11" fill="none" stroke="#bdbdbd" stroke-width="1.1"/></svg>
<svg style="left:1343px;top:470.55px;" width="19" height="15" viewBox="0 0 19 15"><path d="M1 1.2H8V3H18V14H1Z" fill="#e0e0e0"/><path d="M1 3.5H18" stroke="#535353" stroke-width="0.9"/></svg>
<div id="t100" class="t" style="top:472.05px;font-size:13px;line-height:13px;color:#ececec;font-weight:400;font-family:'Liberation Sans',sans-serif;white-space:pre;left:1376.5px;transform:scaleX(0.9520);transform-origin:0 0;">Account Data</div>
<div style="left:1286px;top:494.7px;width:276px;height:29.5px;background:#535353;"></div>
<div style="left:1286px;top:494.7px;width:37px;height:29.5px;background:#5e823c;"></div>
<svg style="left:1296.5px;top:504.15px;" width="18" height="12" viewBox="0 0 18 12"><path d="M1 6Q9 -3 17 6Q9 15 1 6Z" fill="#eef0f4"/><circle cx="9" cy="6" r="3.7" fill="#5e823c"/><circle cx="10.1" cy="4.6" r="0.8" fill="#eef0f4"/></svg>
<svg style="left:1328px;top:505.45px;" width="11" height="7" viewBox="0 0 11 7"><path d="M1 1L5.5 5.5L10 1" fill="none" stroke="#bdbdbd" stroke-width="1.1"/></svg>
<svg style="left:1343px;top:501.95px;" width="19" height="15" viewBox="0 0 19 15"><path d="M1 1.5H7.5L9 3.5H18V13.5H1Z" fill="#e0e0e0"/><path d="M1 6H18" stroke="#535353" stroke-width="1.3"/><path d="M2.3 4.5V6" stroke="#535353"/></svg>
<div id="t101" class="t" style="top:503.45px;font-size:13px;line-height:13px;color:#ececec;font-weight:400;font-family:'Liberation Sans',sans-serif;white-space:pre;left:1376.5px;transform:scaleX(0.9252);transform-origin:0 0;">Bill Data</div>
<div style="left:1286px;top:526.2px;width:276px;height:49px;background:#535353;"></div>
<div style="left:1286px;top:526.2px;width:37px;height:49px;background:#5e823c;"></div>
<svg style="left:1296.5px;top:545.4000000000001px;" width="18" height="12" viewBox="0 0 18 12"><path d="M1 6Q9 -3 17 6Q9 15 1 6Z" fill="#eef0f4"/><circle cx="9" cy="6" r="3.7" fill="#5e823c"/><circle cx="10.1" cy="4.6" r="0.8" fill="#eef0f4"/></svg>
<div id="t102" class="t" style="top:539.73px;font-size:23px;line-height:23px;color:#e6e6e6;font-weight:400;font-family:'Liberation Serif',sans-serif;white-space:pre;left:1360px;">T</div>
<div id="t103" class="t" style="top:545.20px;font-size:13px;line-height:13px;color:#ececec;font-weight:400;font-family:'Liberation Sans',sans-serif;white-space:pre;left:1399.8px;transform:scaleX(0.9426);transform-origin:0 0;">$560.00</div>
<div style="left:1286px;top:577.5px;width:276px;height:49.5px;background:#535353;"></div>
<div style="left:1286px;top:577.5px;width:37px;height:49.5px;background:#5e823c;"></div>
<svg style="left:1296.5px;top:596.95px;" width="18" height="12" viewBox="0 0 18 12"><path d="M1 6Q9 -3 17 6Q9 15 1 6Z" fill="#eef0f4"/><circle cx="9" cy="6" r="3.7" fill="#5e823c"/><circle cx="10.1" cy="4.6" r="0.8" fill="#eef0f4"/></svg>
<div id="t104" class="t" style="top:590.47px;font-size:21px;line-height:21px;color:#e6e6e6;font-weight:400;font-family:'Liberation Serif',sans-serif;white-space:pre;left:1361px;">T</div>
<svg style="left:1369px;top:600.25px;" width="17" height="15" viewBox="0 0 17 15"><path d="M8.5 0.5L16.5 14.5H0.5Z" fill="#e6e6e6" stroke="#535353" stroke-width="1"/><path d="M8.5 5V10M8.5 11.5V13" stroke="#535353" stroke-width="1.8"/></svg>
<div id="t105" class="t" style="top:595.75px;font-size:13px;line-height:13px;color:#ececec;font-weight:400;font-family:'Liberation Sans',sans-serif;white-space:pre;left:1400.2px;transform:scaleX(0.9503);transform-origin:0 0;">Mar 31, 2020</div>
<div style="left:1286px;top:628.3px;width:276px;height:29.5px;background:#535353;"></div>
<div style="left:1286px;top:628.3px;width:37px;height:29.5px;background:#5e823c;"></div>
<svg style="left:1296.5px;top:637.75px;" width="18" height="12" viewBox="0 0 18 12"><path d="M1 6Q9 -3 17 6Q9 15 1 6Z" fill="#eef0f4"/><circle cx="9" cy="6" r="3.7" fill="#5e823c"/><circle cx="10.1" cy="4.6" r="0.8" fill="#eef0f4"/></svg>
<svg style="left:1330px;top:637.05px;" width="6" height="12" viewBox="0 0 6 12"><path d="M1 1L5 6L1 11" fill="none" stroke="#bdbdbd" stroke-width="1.1"/></svg>
<svg style="left:1343px;top:635.55px;" width="19" height="15" viewBox="0 0 19 15"><path d="M1 1.2H8V3H18V14H1Z" fill="#e0e0e0"/><path d="M1 3.5H18" stroke="#535353" stroke-width="0.9"/></svg>
<div id="t106" class="t" style="top:637.05px;font-size:13px;line-height:13px;color:#ececec;font-weight:400;font-family:'Liberation Sans',sans-serif;white-space:pre;left:1376.5px;transform:scaleX(0.9752);transform-origin:0 0;">Consumption ...and Amounts</div>
<div style="left:1286px;top:659.6px;width:276px;height:29.5px;background:#535353;"></div>
<div style="left:1286px;top:659.6px;width:37px;height:29.5px;background:#5e823c;"></div>
<svg style="left:1296.5px;top:669.0500000000001px;" width="18" height="12" viewBox="0 0 18 12"><path d="M1 6Q9 -3 17 6Q9 15 1 6Z" fill="#eef0f4"/><circle cx="9" cy="6" r="3.7" fill="#5e823c"/><circle cx="10.1" cy="4.6" r="0.8" fill="#eef0f4"/></svg>
<svg style="left:1330px;top:668.35px;" width="6" height="12" viewBox="0 0 6 12"><path d="M1 1L5 6L1 11" fill="none" stroke="#bdbdbd" stroke-width="1.1"/></svg>
<svg style="left:1343px;top:666.85px;" width="19" height="15" viewBox="0 0 19 15"><path d="M1 1.2H8V3H18V14H1Z" fill="#e0e0e0"/><path d="M1 3.5H18" stroke="#535353" stroke-width="0.9"/></svg>
<div id="t107" class="t" style="top:668.35px;font-size:13px;line-height:13px;color:#ececec;font-weight:400;font-family:'Liberation Sans',sans-serif;white-space:pre;left:1376.5px;transform:scaleX(0.9551);transform-origin:0 0;">The usage comparing</div>
<div style="left:1286px;top:691px;width:276px;height:29px;background:#535353;"></div>
<div style="left:1286px;top:691px;width:37px;height:29px;background:#5e823c;"></div>
<svg style="left:1296.5px;top:700.2px;" width="18" height="12" viewBox="0 0 18 12"><path d="M1 6Q9 -3 17 6Q9 15 1 6Z" fill="#eef0f4"/><circle cx="9" cy="6" r="3.7" fill="#5e823c"/><circle cx="10.1" cy="4.6" r="0.8" fill="#eef0f4"/></svg>
<svg style="left:1330px;top:699.5px;" width="6" height="12" viewBox="0 0 6 12"><path d="M1 1L5 6L1 11" fill="none" stroke="#bdbdbd" stroke-width="1.1"/></svg>
<svg style="left:1343px;top:698.0px;" width="19" height="15" viewBox="0 0 19 15"><path d="M1 1.2H8V3H18V14H1Z" fill="#e0e0e0"/><path d="M1 3.5H18" stroke="#535353" stroke-width="0.9"/></svg>
<div id="t108" class="t" style="top:699.50px;font-size:13px;line-height:13px;color:#ececec;font-weight:400;font-family:'Liberation Sans',sans-serif;white-space:pre;left:1376.5px;transform:scaleX(1.0163);transform-origin:0 0;">Bottom part</div>
<div style="left:1286px;top:722px;width:276px;height:29.6px;background:#535353;"></div>
<div style="left:1286px;top:722px;width:37px;height:29.6px;background:#b44442;"></div>
<svg style="left:1296.5px;top:731.5px;" width="18" height="12" viewBox="0 0 18 12"><path d="M1 6Q9 -3 17 6Q9 15 1 6Z" fill="#eef0f4"/><circle cx="9" cy="6" r="3.7" fill="#b44442"/><circle cx="10.1" cy="4.6" r="0.8" fill="#eef0f4"/></svg>
<svg style="left:1330px;top:730.8px;" width="6" height="12" viewBox="0 0 6 12"><path d="M1 1L5 6L1 11" fill="none" stroke="#bdbdbd" stroke-width="1.1"/></svg>
<svg style="left:1343px;top:729.3px;" width="19" height="15" viewBox="0 0 19 15"><path d="M1 1.2H8V3H18V14H1Z" fill="#e0e0e0"/><path d="M1 3.5H18" stroke="#535353" stroke-width="0.9"/></svg>
<div id="t109" class="t" style="top:730.80px;font-size:13px;line-height:13px;color:#ececec;font-weight:400;font-family:'Liberation Sans',sans-serif;white-space:pre;left:1376.5px;transform:scaleX(0.9884);transform-origin:0 0;">Don’t touch</div>
<svg style="left:1527px;top:728.8px;" width="15" height="16" viewBox="0 0 15 16"><path d="M4 7V5a3.5 3.5 0 0 1 7 0V7" fill="none" stroke="#d8d8d8" stroke-width="1.8"/><rect x="1.5" y="7" width="12" height="8.5" rx="1" fill="#d8d8d8"/><circle cx="7.5" cy="11" r="1.3" fill="#535353"/></svg>
<div style="left:1286px;top:753.1px;width:276px;height:16px;background:#535353;"></div>
<div style="left:1286px;top:753.1px;width:37px;height:16px;background:#b44442;"></div>
<div style="left:1329px;top:759px;width:32px;height:8px;background:#fff;border:1px solid #222;"></div>
<div style="left:1561.5px;top:278px;width:19.5px;height:491px;background:#4a4a4a;"></div>
<div style="left:1563.2px;top:299.1px;width:14.9px;height:416.6px;background:#686868;border-radius:2px;"></div>
<svg style="left:1566px;top:286px;" width="12" height="8" viewBox="0 0 12 8"><path d="M1 7L6 2L11 7" fill="none" stroke="#7a7a7a" stroke-width="1.2"/></svg>
<svg style="left:1566px;top:752px;" width="12" height="8" viewBox="0 0 12 8"><path d="M1 1L6 6L11 1" fill="none" stroke="#7a7a7a" stroke-width="1.2"/></svg>
<div style="left:1286px;top:768px;width:294px;height:1.5px;background:#3a3a3a;"></div>
<div style="left:1286px;top:769.5px;width:294px;height:29px;background:#535353;"></div>
<svg style="left:1325px;top:776px;" width="22" height="14" viewBox="0 0 22 14"><rect x="1.5" y="2.5" width="11" height="8.5" rx="4.2" fill="none" stroke="#9a9a9a" stroke-width="1.6"/><rect x="8.5" y="2.5" width="11" height="8.5" rx="4.2" fill="none" stroke="#9a9a9a" stroke-width="1.6"/><path d="M6 6.75H16" stroke="#9a9a9a" stroke-width="1.6"/></svg>
<div id="t110" class="t" style="top:775.11px;font-size:17px;line-height:17px;color:#d2d2d2;font-weight:400;font-family:'Liberation Sans',sans-serif;white-space:pre;font-style:italic;left:1363.5px;">fx</div>
<svg style="left:1376px;top:790px;" width="7" height="5" viewBox="0 0 7 5"><path d="M0 0H7L3.5 4Z" fill="#d2d2d2"/></svg>
<svg style="left:1396px;top:776px;" width="17" height="14" viewBox="0 0 17 14"><rect x="0" y="0" width="17" height="14" fill="#d2d2d2"/><circle cx="8.5" cy="7" r="3.8" fill="#535353"/></svg>
<svg style="left:1431px;top:774px;" width="20" height="21" viewBox="0 0 20 21"><circle cx="8.5" cy="8.5" r="7" fill="none" stroke="#d2d2d2" stroke-width="1.6"/><path d="M13.5 3.5A7 7 0 0 1 3.5 13.5Z" fill="#d2d2d2"/><path d="M13 16H19L16 19.5Z" fill="#d2d2d2"/></svg>
<svg style="left:1462px;top:776px;" width="17" height="15" viewBox="0 0 17 15"><path d="M0.5 1.5H6.5V3.5H16.5V14.5H0.5Z" fill="#d2d2d2"/></svg>
<svg style="left:1497px;top:775px;" width="16" height="16" viewBox="0 0 16 16"><rect x="1" y="1" width="14" height="14" fill="none" stroke="#d2d2d2" stroke-width="1.5"/><path d="M8 4.5V11.5M4.5 8H11.5" stroke="#d2d2d2" stroke-width="1.6"/></svg>
<svg style="left:1530px;top:774px;" width="16" height="18" viewBox="0 0 16 18"><path d="M1 4H15M5.5 4V1.5H10.5V4" fill="none" stroke="#d2d2d2" stroke-width="1.4"/><path d="M2.5 4.5L3.3 16.5H12.7L13.5 4.5" fill="none" stroke="#d2d2d2" stroke-width="1.5"/><path d="M6 6.5V14.5M8 6.5V14.5M10 6.5V14.5" stroke="#d2d2d2" stroke-width="1.1"/></svg>
<div style="left:1286px;top:798.5px;width:294px;height:2px;background:#3c3c3c;"></div>
<div style="left:1286px;top:800.5px;width:294px;height:8.5px;background:#4a4a4a;"></div>
<div style="left:1421px;top:802px;width:1px;height:5px;background:#383838;"></div>
<div style="left:1423px;top:802px;width:1px;height:5px;background:#383838;"></div>
<div style="left:1425px;top:802px;width:1px;height:5px;background:#383838;"></div>
<div style="left:1427px;top:802px;width:1px;height:5px;background:#383838;"></div>
<div style="left:1429px;top:802px;width:1px;height:5px;background:#383838;"></div>
<div style="left:1431px;top:802px;width:1px;height:5px;background:#383838;"></div>
<div style="left:1433px;top:802px;width:1px;height:5px;background:#383838;"></div>
<div style="left:1435px;top:802px;width:1px;height:5px;background:#383838;"></div>
<div style="left:1437px;top:802px;width:1px;height:5px;background:#383838;"></div>
<div style="left:1439px;top:802px;width:1px;height:5px;background:#383838;"></div>
<div style="left:1441px;top:802px;width:1px;height:5px;background:#383838;"></div>
<div style="left:1443px;top:802px;width:1px;height:5px;background:#383838;"></div>
<div style="left:1445px;top:802px;width:1px;height:5px;background:#383838;"></div>
</body></html>
